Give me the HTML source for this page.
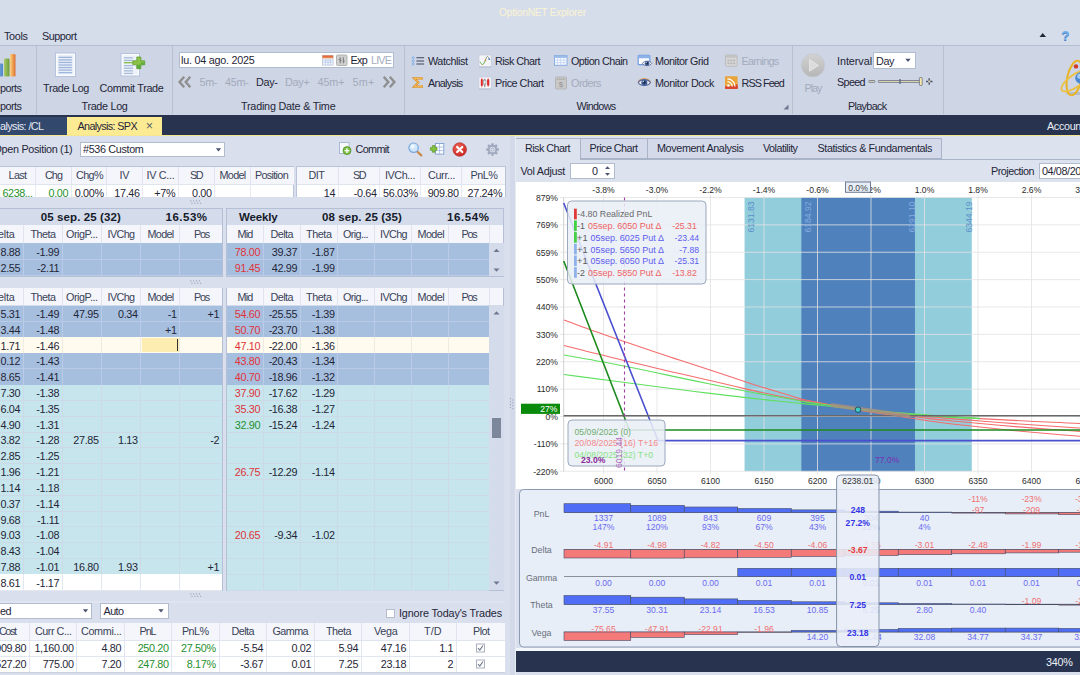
<!DOCTYPE html>
<html lang="es"><head><meta charset="utf-8"><title>OptionNET Explorer</title>
<style>
html,body{margin:0;padding:0;}
body{width:1080px;height:675px;overflow:hidden;background:#d5dcea;font-family:"Liberation Sans",sans-serif;position:relative;}
.t{position:absolute;white-space:pre;line-height:1;}
.b{position:absolute;box-sizing:border-box;}
svg{overflow:visible;}
svg text{font-family:"Liberation Sans",sans-serif;}
</style></head>
<body>
<div class="t" style="left:499px;top:8px;font-size:10.2px;letter-spacing:-0.23px;color:#fbf4d2;">OptionNET Explorer</div>
<div class="t" style="left:4px;top:31px;font-size:10.8px;letter-spacing:-0.34px;color:#1f2638;">Tools</div>
<div class="t" style="left:42px;top:31px;font-size:10.8px;letter-spacing:-0.48px;color:#1f2638;">Support</div>
<svg class="b" style="left:1039px;top:32px" width="9" height="7"><g transform="translate(0 0)"><path d="M0.5 5 L3.7 1 L7 5 Z" fill="#1f2638"/></g></svg>
<div class="t" style="left:1061.18px;top:29px;font-size:13.5px;letter-spacing:0px;color:#74aee6;font-weight:bold;text-shadow:0 0.6px 0 #3f7fc4;">?</div>
<div class="b" style="left:0px;top:45px;width:1080px;height:70px;background:#ced5e5;border-top:1px solid #b4bed2;box-sizing:border-box;"></div>
<div class="b" style="left:35.5px;top:46px;width:1px;height:67.5px;background:#b7c0d3;"></div>
<div class="b" style="left:172px;top:46px;width:1px;height:67.5px;background:#b7c0d3;"></div>
<div class="b" style="left:404px;top:46px;width:1px;height:67.5px;background:#b7c0d3;"></div>
<div class="b" style="left:792px;top:46px;width:1px;height:67.5px;background:#b7c0d3;"></div>
<div class="b" style="left:942.5px;top:46px;width:1px;height:67.5px;background:#b7c0d3;"></div>
<div class="t" style="left:0px;top:101px;font-size:10.8px;letter-spacing:-0.5px;color:#1f2638;">ports</div>
<div class="t" style="left:81.5px;top:101px;font-size:10.8px;letter-spacing:-0.31px;color:#1f2638;">Trade Log</div>
<div class="t" style="left:241px;top:101px;font-size:10.8px;letter-spacing:-0.22px;color:#1f2638;">Trading Date &amp; Time</div>
<div class="t" style="left:576.5px;top:101px;font-size:10.8px;letter-spacing:-0.69px;color:#1f2638;">Windows</div>
<div class="t" style="left:848px;top:101px;font-size:10.8px;letter-spacing:-0.67px;color:#1f2638;">Playback</div>
<svg class="b" style="left:783px;top:104px" width="7" height="7"><g transform="translate(0 0)"><path d="M5.5 0.5 V5.5 H0.5 Z" fill="#6d7890"/></g></svg>
<div class="t" style="left:0px;top:83px;font-size:10.8px;letter-spacing:-0.5px;color:#1f2638;">ports</div>
<div class="t" style="left:43px;top:83px;font-size:10.8px;letter-spacing:-0.31px;color:#1f2638;">Trade Log</div>
<div class="t" style="left:99.5px;top:83px;font-size:10.8px;letter-spacing:-0.32px;color:#1f2638;">Commit Trade</div>
<div class="b" style="left:179px;top:51.5px;width:214.5px;height:16.5px;background:#ffffff;border:1px solid #b2bccf;box-sizing:border-box;"></div>
<div class="t" style="left:181px;top:55px;font-size:10.8px;letter-spacing:-0.25px;color:#1f2638;">lu. 04 ago. 2025</div>
<div class="t" style="left:350.5px;top:55px;font-size:10.8px;letter-spacing:-0.7px;color:#1f2638;">Exp</div>
<div class="t" style="left:371px;top:55px;font-size:10.8px;letter-spacing:-0.85px;color:#a7aebd;">LIVE</div>
<div class="t" style="left:199.5px;top:77px;font-size:10.8px;letter-spacing:-0.37px;color:#a3abbb;">5m-</div>
<div class="t" style="left:225px;top:77px;font-size:10.8px;letter-spacing:-0.28px;color:#a3abbb;">45m-</div>
<div class="t" style="left:256px;top:77px;font-size:10.8px;letter-spacing:-0.33px;color:#1f2638;">Day-</div>
<div class="t" style="left:285px;top:77px;font-size:10.8px;letter-spacing:-0.25px;color:#a3abbb;">Day+</div>
<div class="t" style="left:317.5px;top:77px;font-size:10.8px;letter-spacing:-0.08px;color:#a3abbb;">45m+</div>
<div class="t" style="left:352.5px;top:77px;font-size:10.8px;letter-spacing:0.23px;color:#a3abbb;">5m+</div>
<div class="t" style="left:428px;top:56px;font-size:10.8px;letter-spacing:-0.43px;color:#1f2638;">Watchlist</div>
<div class="t" style="left:428px;top:78px;font-size:10.8px;letter-spacing:-0.71px;color:#1f2638;">Analysis</div>
<div class="t" style="left:495px;top:56px;font-size:10.8px;letter-spacing:-0.54px;color:#1f2638;">Risk Chart</div>
<div class="t" style="left:495px;top:78px;font-size:10.8px;letter-spacing:-0.5px;color:#1f2638;">Price Chart</div>
<div class="t" style="left:571px;top:56px;font-size:10.8px;letter-spacing:-0.54px;color:#1f2638;">Option Chain</div>
<div class="t" style="left:571px;top:78px;font-size:10.8px;letter-spacing:-0.5px;color:#a3abbb;">Orders</div>
<div class="t" style="left:655px;top:56px;font-size:10.8px;letter-spacing:-0.49px;color:#1f2638;">Monitor Grid</div>
<div class="t" style="left:655px;top:78px;font-size:10.8px;letter-spacing:-0.39px;color:#1f2638;">Monitor Dock</div>
<div class="t" style="left:741.5px;top:56px;font-size:10.8px;letter-spacing:-0.7px;color:#a3abbb;">Earnings</div>
<div class="t" style="left:741.5px;top:78px;font-size:10.8px;letter-spacing:-0.92px;color:#1f2638;">RSS Feed</div>
<div class="t" style="left:804.5px;top:83px;font-size:10.8px;letter-spacing:-1px;color:#a3abbb;">Play</div>
<div class="t" style="left:837px;top:56px;font-size:10.8px;letter-spacing:-0.05px;color:#1f2638;">Interval</div>
<div class="b" style="left:873px;top:52px;width:43px;height:16.5px;background:#ffffff;border:1px solid #b2bccf;box-sizing:border-box;"></div>
<div class="t" style="left:876px;top:56px;font-size:10.8px;letter-spacing:-0.4px;color:#1f2638;">Day</div>
<svg class="b" style="left:905px;top:58px" width="7" height="5"><g transform="translate(0 0.5)"><path d="M0.3 0.3 H5.7 L3 3.6 Z" fill="#4a556e"/></g></svg>
<div class="t" style="left:837px;top:77px;font-size:10.8px;letter-spacing:-0.65px;color:#1f2638;">Speed</div>
<div class="b" style="left:0px;top:115px;width:1080px;height:20.5px;background:#28344f;"></div>
<div class="b" style="left:0px;top:117px;width:67px;height:18.5px;background:#33486d;"></div>
<div class="t" style="left:0px;top:121px;font-size:10.8px;letter-spacing:-0.57px;color:#e8ecf5;">alysis: /CL</div>
<div class="b" style="left:67px;top:117px;width:94.5px;height:19px;background:#fdeb93;"></div>
<div class="t" style="left:77.5px;top:121px;font-size:10.8px;letter-spacing:-0.64px;color:#1f2638;">Analysis: SPX</div>
<div class="t" style="left:145.85px;top:120px;font-size:12.5px;letter-spacing:0px;color:#5a5f6c;">×</div>
<div class="t" style="left:1047px;top:121px;font-size:10.8px;letter-spacing:-0.34px;color:#e8ecf5;">Accoun</div>
<div class="b" style="left:0px;top:134.8px;width:1080px;height:1.4px;background:#f5e791;"></div>
<div class="b" style="left:0px;top:136.2px;width:1080px;height:540px;background:#d9dfed;"></div>
<div class="t" style="left:-6.5px;top:144px;font-size:10.8px;letter-spacing:-0.3px;color:#1f2638;">Open Position (1)</div>
<div class="b" style="left:80px;top:142px;width:145px;height:15px;background:#ffffff;border:1px solid #b2bccf;"></div>
<div class="t" style="left:83px;top:144px;font-size:10.8px;letter-spacing:-0.34px;color:#1f2638;">#536 Custom</div>
<svg class="b" style="left:215px;top:148px" width="7" height="5"><g transform="translate(0.5 0)"><path d="M0.3 0.3 H5.7 L3 3.6 Z" fill="#4a556e"/></g></svg>
<div class="t" style="left:355.5px;top:144px;font-size:10.8px;letter-spacing:-0.62px;color:#1f2638;">Commit</div>
<div class="b" style="left:-1px;top:166.3px;width:295px;height:32px;background:#ffffff;border:1px solid #b9c4da;"></div>
<div class="b" style="left:-1px;top:167px;width:294.5px;height:17.5px;background:#f4f6fb;"></div>
<div class="b" style="left:35px;top:167px;width:1px;height:17.5px;background:#dfe4ef;"></div>
<div class="b" style="left:71px;top:167px;width:1px;height:17.5px;background:#dfe4ef;"></div>
<div class="b" style="left:106px;top:167px;width:1px;height:17.5px;background:#dfe4ef;"></div>
<div class="b" style="left:142px;top:167px;width:1px;height:17.5px;background:#dfe4ef;"></div>
<div class="b" style="left:177.5px;top:167px;width:1px;height:17.5px;background:#dfe4ef;"></div>
<div class="b" style="left:213.5px;top:167px;width:1px;height:17.5px;background:#dfe4ef;"></div>
<div class="b" style="left:249.5px;top:167px;width:1px;height:17.5px;background:#dfe4ef;"></div>
<div class="t" style="left:8.5px;top:170px;font-size:10.8px;letter-spacing:-0.6px;color:#3a4258;">Last</div>
<div class="t" style="left:45px;top:170px;font-size:10.8px;letter-spacing:-0.94px;color:#3a4258;">Chg</div>
<div class="t" style="left:76px;top:170px;font-size:10.8px;letter-spacing:-0.6px;color:#3a4258;">Chg%</div>
<div class="t" style="left:119.5px;top:170px;font-size:10.8px;letter-spacing:-0.35px;color:#3a4258;">IV</div>
<div class="t" style="left:146.5px;top:170px;font-size:10.8px;letter-spacing:-0.29px;color:#3a4258;">IV C...</div>
<div class="t" style="left:190px;top:170px;font-size:10.8px;letter-spacing:-1.5px;color:#3a4258;">SD</div>
<div class="t" style="left:219.5px;top:170px;font-size:10.8px;letter-spacing:-0.68px;color:#3a4258;">Model</div>
<div class="t" style="left:255px;top:170px;font-size:10.8px;letter-spacing:-0.68px;color:#3a4258;">Position</div>
<div class="b" style="left:-1px;top:184px;width:294.5px;height:1px;background:#dfe4ef;"></div>
<div class="b" style="left:35px;top:184.5px;width:1px;height:13px;background:#e6eaf2;"></div>
<div class="b" style="left:71px;top:184.5px;width:1px;height:13px;background:#e6eaf2;"></div>
<div class="b" style="left:106px;top:184.5px;width:1px;height:13px;background:#e6eaf2;"></div>
<div class="b" style="left:142px;top:184.5px;width:1px;height:13px;background:#e6eaf2;"></div>
<div class="b" style="left:177.5px;top:184.5px;width:1px;height:13px;background:#e6eaf2;"></div>
<div class="b" style="left:213.5px;top:184.5px;width:1px;height:13px;background:#e6eaf2;"></div>
<div class="b" style="left:249.5px;top:184.5px;width:1px;height:13px;background:#e6eaf2;"></div>
<div class="t" style="left:2.5px;top:188px;font-size:10.8px;letter-spacing:-0.43px;color:#1f8f2e;">6238...</div>
<div class="t" style="left:48.53px;top:188px;font-size:10.8px;letter-spacing:-0.35px;color:#1f8f2e;">0.00</div>
<div class="t" style="left:74.78px;top:188px;font-size:10.8px;letter-spacing:-0.35px;color:#1f2638;">0.00%</div>
<div class="t" style="left:114.37px;top:188px;font-size:10.8px;letter-spacing:-0.35px;color:#1f2638;">17.46</div>
<div class="t" style="left:154.28px;top:188px;font-size:10.8px;letter-spacing:-0.35px;color:#1f2638;">+7%</div>
<div class="t" style="left:192.03px;top:188px;font-size:10.8px;letter-spacing:-0.35px;color:#1f2638;">0.00</div>
<div class="b" style="left:296.4px;top:166.3px;width:209.2px;height:32px;background:#ffffff;border:1px solid #b9c4da;"></div>
<div class="b" style="left:297px;top:167px;width:208px;height:17.5px;background:#f4f6fb;"></div>
<div class="b" style="left:337.5px;top:167px;width:1px;height:17.5px;background:#dfe4ef;"></div>
<div class="b" style="left:378.5px;top:167px;width:1px;height:17.5px;background:#dfe4ef;"></div>
<div class="b" style="left:420px;top:167px;width:1px;height:17.5px;background:#dfe4ef;"></div>
<div class="b" style="left:461.2px;top:167px;width:1px;height:17.5px;background:#dfe4ef;"></div>
<div class="t" style="left:308.5px;top:170px;font-size:10.8px;letter-spacing:-0.47px;color:#3a4258;">DIT</div>
<div class="t" style="left:353px;top:170px;font-size:10.8px;letter-spacing:-1.5px;color:#3a4258;">SD</div>
<div class="t" style="left:385px;top:170px;font-size:10.8px;letter-spacing:-0.43px;color:#3a4258;">IVCh...</div>
<div class="t" style="left:428px;top:170px;font-size:10.8px;letter-spacing:-0.34px;color:#3a4258;">Curr...</div>
<div class="t" style="left:470.5px;top:170px;font-size:10.8px;letter-spacing:-0.45px;color:#3a4258;">PnL%</div>
<div class="b" style="left:297px;top:184px;width:208px;height:1px;background:#dfe4ef;"></div>
<div class="b" style="left:337.5px;top:184.5px;width:1px;height:13px;background:#e6eaf2;"></div>
<div class="b" style="left:378.5px;top:184.5px;width:1px;height:13px;background:#e6eaf2;"></div>
<div class="b" style="left:420px;top:184.5px;width:1px;height:13px;background:#e6eaf2;"></div>
<div class="b" style="left:461.2px;top:184.5px;width:1px;height:13px;background:#e6eaf2;"></div>
<div class="t" style="left:323.84px;top:188px;font-size:10.8px;letter-spacing:-0.35px;color:#1f2638;">14</div>
<div class="t" style="left:353.78px;top:188px;font-size:10.8px;letter-spacing:-0.35px;color:#1f2638;">-0.64</div>
<div class="t" style="left:383.12px;top:188px;font-size:10.8px;letter-spacing:-0.35px;color:#1f2638;">56.03%</div>
<div class="t" style="left:427.72px;top:188px;font-size:10.8px;letter-spacing:-0.35px;color:#1f2638;">909.80</div>
<div class="t" style="left:467.62px;top:188px;font-size:10.8px;letter-spacing:-0.35px;color:#1f2638;">27.24%</div>
<div class="b" style="left:-1px;top:197.2px;width:520px;height:10.3px;background:#d9dfed;"></div>
<svg class="b" style="left:0;top:0" width="1080" height="675"><rect x="190.15" y="200.3" width="1.2" height="1.2" fill="#9fa9be"/><rect x="191.35" y="202.7" width="1.2" height="1.2" fill="#9fa9be"/><rect x="193.05" y="200.3" width="1.2" height="1.2" fill="#9fa9be"/><rect x="194.25" y="202.7" width="1.2" height="1.2" fill="#9fa9be"/><rect x="195.95" y="200.3" width="1.2" height="1.2" fill="#9fa9be"/><rect x="197.15" y="202.7" width="1.2" height="1.2" fill="#9fa9be"/><rect x="198.85" y="200.3" width="1.2" height="1.2" fill="#9fa9be"/><rect x="200.05" y="202.7" width="1.2" height="1.2" fill="#9fa9be"/></svg>
<svg class="b" style="left:0;top:0" width="1080" height="675"><rect x="190.15" y="280.3" width="1.2" height="1.2" fill="#9fa9be"/><rect x="191.35" y="282.7" width="1.2" height="1.2" fill="#9fa9be"/><rect x="193.05" y="280.3" width="1.2" height="1.2" fill="#9fa9be"/><rect x="194.25" y="282.7" width="1.2" height="1.2" fill="#9fa9be"/><rect x="195.95" y="280.3" width="1.2" height="1.2" fill="#9fa9be"/><rect x="197.15" y="282.7" width="1.2" height="1.2" fill="#9fa9be"/><rect x="198.85" y="280.3" width="1.2" height="1.2" fill="#9fa9be"/><rect x="200.05" y="282.7" width="1.2" height="1.2" fill="#9fa9be"/></svg>
<svg class="b" style="left:0;top:0" width="1080" height="675"><rect x="190.15" y="593.3" width="1.2" height="1.2" fill="#9fa9be"/><rect x="191.35" y="595.7" width="1.2" height="1.2" fill="#9fa9be"/><rect x="193.05" y="593.3" width="1.2" height="1.2" fill="#9fa9be"/><rect x="194.25" y="595.7" width="1.2" height="1.2" fill="#9fa9be"/><rect x="195.95" y="593.3" width="1.2" height="1.2" fill="#9fa9be"/><rect x="197.15" y="595.7" width="1.2" height="1.2" fill="#9fa9be"/><rect x="198.85" y="593.3" width="1.2" height="1.2" fill="#9fa9be"/><rect x="200.05" y="595.7" width="1.2" height="1.2" fill="#9fa9be"/></svg>
<div class="b" style="left:-1px;top:207.5px;width:224px;height:69.5px;background:#d4dbeb;border:1px solid #b5c0d6;"></div>
<div class="t" style="left:40.7px;top:212px;font-size:11.5px;letter-spacing:0.11px;color:#141a29;font-weight:bold;">05 sep. 25 (32)</div>
<div class="t" style="left:165.5px;top:212px;font-size:11.5px;letter-spacing:0.5px;color:#141a29;font-weight:bold;">16.53%</div>
<div class="b" style="left:0px;top:225.3px;width:222px;height:18px;background:#f4f6fb;"></div>
<div class="b" style="left:22.5px;top:225.3px;width:1px;height:18px;background:#dfe4ef;"></div>
<div class="b" style="left:61.5px;top:225.3px;width:1px;height:18px;background:#dfe4ef;"></div>
<div class="b" style="left:100.5px;top:225.3px;width:1px;height:18px;background:#dfe4ef;"></div>
<div class="b" style="left:140px;top:225.3px;width:1px;height:18px;background:#dfe4ef;"></div>
<div class="b" style="left:179px;top:225.3px;width:1px;height:18px;background:#dfe4ef;"></div>
<div class="t" style="left:-2px;top:229px;font-size:10.8px;letter-spacing:-0.23px;color:#3a4258;">elta</div>
<div class="t" style="left:30.5px;top:229px;font-size:10.8px;letter-spacing:-0.52px;color:#3a4258;">Theta</div>
<div class="t" style="left:66px;top:229px;font-size:10.8px;letter-spacing:-0.46px;color:#3a4258;">OrigP...</div>
<div class="t" style="left:107.5px;top:229px;font-size:10.8px;letter-spacing:-0.6px;color:#3a4258;">IVChg</div>
<div class="t" style="left:147.5px;top:229px;font-size:10.8px;letter-spacing:-0.68px;color:#3a4258;">Model</div>
<div class="t" style="left:194px;top:229px;font-size:10.8px;letter-spacing:-1.2px;color:#3a4258;">Pos</div>
<div class="b" style="left:0px;top:243.3px;width:222px;height:15.95px;background:#a7bfde;"></div>
<div class="b" style="left:0px;top:259.2px;width:222px;height:15.95px;background:#a7bfde;"></div>
<div class="b" style="left:22.5px;top:243.3px;width:1px;height:15.9px;background:#b9cbe6;"></div>
<div class="b" style="left:61.5px;top:243.3px;width:1px;height:15.9px;background:#b9cbe6;"></div>
<div class="b" style="left:100.5px;top:243.3px;width:1px;height:15.9px;background:#b9cbe6;"></div>
<div class="b" style="left:140px;top:243.3px;width:1px;height:15.9px;background:#b9cbe6;"></div>
<div class="b" style="left:179px;top:243.3px;width:1px;height:15.9px;background:#b9cbe6;"></div>
<div class="b" style="left:0px;top:258.7px;width:222px;height:1px;background:#b9cbe6;"></div>
<div class="b" style="left:22.5px;top:259.2px;width:1px;height:15.9px;background:#b9cbe6;"></div>
<div class="b" style="left:61.5px;top:259.2px;width:1px;height:15.9px;background:#b9cbe6;"></div>
<div class="b" style="left:100.5px;top:259.2px;width:1px;height:15.9px;background:#b9cbe6;"></div>
<div class="b" style="left:140px;top:259.2px;width:1px;height:15.9px;background:#b9cbe6;"></div>
<div class="b" style="left:179px;top:259.2px;width:1px;height:15.9px;background:#b9cbe6;"></div>
<div class="b" style="left:0px;top:274.6px;width:222px;height:1px;background:#b9cbe6;"></div>
<div class="t" style="left:0.53px;top:247px;font-size:10.8px;letter-spacing:-0.35px;color:#1f2638;">8.88</div>
<div class="t" style="left:36.28px;top:247px;font-size:10.8px;letter-spacing:-0.35px;color:#1f2638;">-1.99</div>
<div class="t" style="left:0.53px;top:263px;font-size:10.8px;letter-spacing:-0.35px;color:#1f2638;">2.55</div>
<div class="t" style="left:37.08px;top:263px;font-size:10.8px;letter-spacing:-0.35px;color:#1f2638;">-2.11</div>
<div class="b" style="left:225.6px;top:207.5px;width:278.9px;height:69.5px;background:#d4dbeb;border:1px solid #b5c0d6;"></div>
<div class="t" style="left:239px;top:212px;font-size:11.5px;letter-spacing:-0.15px;color:#141a29;font-weight:bold;">Weekly</div>
<div class="t" style="left:322px;top:212px;font-size:11.5px;letter-spacing:0.09px;color:#141a29;font-weight:bold;">08 sep. 25 (35)</div>
<div class="t" style="left:447px;top:212px;font-size:11.5px;letter-spacing:0.58px;color:#141a29;font-weight:bold;">16.54%</div>
<div class="b" style="left:226.6px;top:225.3px;width:276.9px;height:18px;background:#f4f6fb;"></div>
<div class="b" style="left:262.5px;top:225.3px;width:1px;height:18px;background:#dfe4ef;"></div>
<div class="b" style="left:299.5px;top:225.3px;width:1px;height:18px;background:#dfe4ef;"></div>
<div class="b" style="left:336.5px;top:225.3px;width:1px;height:18px;background:#dfe4ef;"></div>
<div class="b" style="left:373.5px;top:225.3px;width:1px;height:18px;background:#dfe4ef;"></div>
<div class="b" style="left:410.5px;top:225.3px;width:1px;height:18px;background:#dfe4ef;"></div>
<div class="b" style="left:447.5px;top:225.3px;width:1px;height:18px;background:#dfe4ef;"></div>
<div class="b" style="left:488.5px;top:225.3px;width:1px;height:18px;background:#dfe4ef;"></div>
<div class="t" style="left:237.5px;top:229px;font-size:10.8px;letter-spacing:-0.8px;color:#3a4258;">Mid</div>
<div class="t" style="left:270.5px;top:229px;font-size:10.8px;letter-spacing:-0.54px;color:#3a4258;">Delta</div>
<div class="t" style="left:306px;top:229px;font-size:10.8px;letter-spacing:-0.42px;color:#3a4258;">Theta</div>
<div class="t" style="left:343px;top:229px;font-size:10.8px;letter-spacing:-0.63px;color:#3a4258;">Orig...</div>
<div class="t" style="left:380px;top:229px;font-size:10.8px;letter-spacing:-0.6px;color:#3a4258;">IVChg</div>
<div class="t" style="left:417.5px;top:229px;font-size:10.8px;letter-spacing:-0.58px;color:#3a4258;">Model</div>
<div class="t" style="left:461.5px;top:229px;font-size:10.8px;letter-spacing:-1.2px;color:#3a4258;">Pos</div>
<div class="b" style="left:226.6px;top:243.3px;width:262.4px;height:15.95px;background:#a7bfde;"></div>
<div class="b" style="left:226.6px;top:259.2px;width:262.4px;height:15.95px;background:#a7bfde;"></div>
<div class="b" style="left:262.5px;top:243.3px;width:1px;height:15.9px;background:#b9cbe6;"></div>
<div class="b" style="left:299.5px;top:243.3px;width:1px;height:15.9px;background:#b9cbe6;"></div>
<div class="b" style="left:336.5px;top:243.3px;width:1px;height:15.9px;background:#b9cbe6;"></div>
<div class="b" style="left:373.5px;top:243.3px;width:1px;height:15.9px;background:#b9cbe6;"></div>
<div class="b" style="left:410.5px;top:243.3px;width:1px;height:15.9px;background:#b9cbe6;"></div>
<div class="b" style="left:447.5px;top:243.3px;width:1px;height:15.9px;background:#b9cbe6;"></div>
<div class="b" style="left:226.6px;top:258.7px;width:262.4px;height:1px;background:#b9cbe6;"></div>
<div class="b" style="left:262.5px;top:259.2px;width:1px;height:15.9px;background:#b9cbe6;"></div>
<div class="b" style="left:299.5px;top:259.2px;width:1px;height:15.9px;background:#b9cbe6;"></div>
<div class="b" style="left:336.5px;top:259.2px;width:1px;height:15.9px;background:#b9cbe6;"></div>
<div class="b" style="left:373.5px;top:259.2px;width:1px;height:15.9px;background:#b9cbe6;"></div>
<div class="b" style="left:410.5px;top:259.2px;width:1px;height:15.9px;background:#b9cbe6;"></div>
<div class="b" style="left:447.5px;top:259.2px;width:1px;height:15.9px;background:#b9cbe6;"></div>
<div class="b" style="left:226.6px;top:274.6px;width:262.4px;height:1px;background:#b9cbe6;"></div>
<div class="t" style="left:234.87px;top:247px;font-size:10.8px;letter-spacing:-0.35px;color:#e0333b;">78.00</div>
<div class="t" style="left:271.87px;top:247px;font-size:10.8px;letter-spacing:-0.35px;color:#1f2638;">39.37</div>
<div class="t" style="left:311.78px;top:247px;font-size:10.8px;letter-spacing:-0.35px;color:#1f2638;">-1.87</div>
<div class="t" style="left:234.87px;top:263px;font-size:10.8px;letter-spacing:-0.35px;color:#e0333b;">91.45</div>
<div class="t" style="left:271.87px;top:263px;font-size:10.8px;letter-spacing:-0.35px;color:#1f2638;">42.99</div>
<div class="t" style="left:311.78px;top:263px;font-size:10.8px;letter-spacing:-0.35px;color:#1f2638;">-1.99</div>
<div class="b" style="left:489px;top:243.3px;width:14.5px;height:32.7px;background:#d4dbeb;"></div>
<svg class="b" style="left:0;top:0" width="1080" height="675"><path d="M493.5 252 L496.5 248.8 L499.5 252 Z" fill="#6d7890"/></svg>
<svg class="b" style="left:0;top:0" width="1080" height="675"><path d="M493.5 268.5 L496.5 271.7 L499.5 268.5 Z" fill="#6d7890"/></svg>
<div class="b" style="left:-1px;top:287.5px;width:224px;height:303.1px;background:#d4dbeb;border:1px solid #b5c0d6;"></div>
<div class="b" style="left:0px;top:288.3px;width:222px;height:17.2px;background:#f4f6fb;"></div>
<div class="b" style="left:22.5px;top:288.3px;width:1px;height:17.2px;background:#dfe4ef;"></div>
<div class="b" style="left:61.5px;top:288.3px;width:1px;height:17.2px;background:#dfe4ef;"></div>
<div class="b" style="left:100.5px;top:288.3px;width:1px;height:17.2px;background:#dfe4ef;"></div>
<div class="b" style="left:140px;top:288.3px;width:1px;height:17.2px;background:#dfe4ef;"></div>
<div class="b" style="left:179px;top:288.3px;width:1px;height:17.2px;background:#dfe4ef;"></div>
<div class="t" style="left:-2px;top:292px;font-size:10.8px;letter-spacing:-0.23px;color:#3a4258;">elta</div>
<div class="t" style="left:30.5px;top:292px;font-size:10.8px;letter-spacing:-0.52px;color:#3a4258;">Theta</div>
<div class="t" style="left:66px;top:292px;font-size:10.8px;letter-spacing:-0.46px;color:#3a4258;">OrigP...</div>
<div class="t" style="left:107.5px;top:292px;font-size:10.8px;letter-spacing:-0.6px;color:#3a4258;">IVChg</div>
<div class="t" style="left:147.5px;top:292px;font-size:10.8px;letter-spacing:-0.68px;color:#3a4258;">Model</div>
<div class="t" style="left:194px;top:292px;font-size:10.8px;letter-spacing:-1.2px;color:#3a4258;">Pos</div>
<div class="b" style="left:0px;top:305.5px;width:222px;height:15.87px;background:#a7bfde;"></div>
<div class="b" style="left:0px;top:321.32px;width:222px;height:15.87px;background:#a7bfde;"></div>
<div class="b" style="left:0px;top:337.14px;width:222px;height:15.87px;background:#fffbee;"></div>
<div class="b" style="left:0px;top:352.96px;width:222px;height:15.87px;background:#a7bfde;"></div>
<div class="b" style="left:0px;top:368.78px;width:222px;height:15.87px;background:#a7bfde;"></div>
<div class="b" style="left:0px;top:384.6px;width:222px;height:15.87px;background:#c6e5ec;"></div>
<div class="b" style="left:0px;top:400.42px;width:222px;height:15.87px;background:#c6e5ec;"></div>
<div class="b" style="left:0px;top:416.24px;width:222px;height:15.87px;background:#c6e5ec;"></div>
<div class="b" style="left:0px;top:432.06px;width:222px;height:15.87px;background:#c6e5ec;"></div>
<div class="b" style="left:0px;top:447.88px;width:222px;height:15.87px;background:#c6e5ec;"></div>
<div class="b" style="left:0px;top:463.7px;width:222px;height:15.87px;background:#c6e5ec;"></div>
<div class="b" style="left:0px;top:479.52px;width:222px;height:15.87px;background:#c6e5ec;"></div>
<div class="b" style="left:0px;top:495.34px;width:222px;height:15.87px;background:#c6e5ec;"></div>
<div class="b" style="left:0px;top:511.16px;width:222px;height:15.87px;background:#c6e5ec;"></div>
<div class="b" style="left:0px;top:526.98px;width:222px;height:15.87px;background:#c6e5ec;"></div>
<div class="b" style="left:0px;top:542.8px;width:222px;height:15.87px;background:#c6e5ec;"></div>
<div class="b" style="left:0px;top:558.62px;width:222px;height:15.87px;background:#c6e5ec;"></div>
<div class="b" style="left:0px;top:574.44px;width:222px;height:15.87px;background:#ffffff;"></div>
<div class="b" style="left:22.5px;top:305.5px;width:1px;height:15.82px;background:#b9cbe6;"></div>
<div class="b" style="left:61.5px;top:305.5px;width:1px;height:15.82px;background:#b9cbe6;"></div>
<div class="b" style="left:100.5px;top:305.5px;width:1px;height:15.82px;background:#b9cbe6;"></div>
<div class="b" style="left:140px;top:305.5px;width:1px;height:15.82px;background:#b9cbe6;"></div>
<div class="b" style="left:179px;top:305.5px;width:1px;height:15.82px;background:#b9cbe6;"></div>
<div class="b" style="left:0px;top:320.82px;width:222px;height:1px;background:#b9cbe6;"></div>
<div class="b" style="left:22.5px;top:321.32px;width:1px;height:15.82px;background:#b9cbe6;"></div>
<div class="b" style="left:61.5px;top:321.32px;width:1px;height:15.82px;background:#b9cbe6;"></div>
<div class="b" style="left:100.5px;top:321.32px;width:1px;height:15.82px;background:#b9cbe6;"></div>
<div class="b" style="left:140px;top:321.32px;width:1px;height:15.82px;background:#b9cbe6;"></div>
<div class="b" style="left:179px;top:321.32px;width:1px;height:15.82px;background:#b9cbe6;"></div>
<div class="b" style="left:22.5px;top:337.14px;width:1px;height:15.82px;background:#efebe0;"></div>
<div class="b" style="left:61.5px;top:337.14px;width:1px;height:15.82px;background:#efebe0;"></div>
<div class="b" style="left:100.5px;top:337.14px;width:1px;height:15.82px;background:#efebe0;"></div>
<div class="b" style="left:140px;top:337.14px;width:1px;height:15.82px;background:#efebe0;"></div>
<div class="b" style="left:179px;top:337.14px;width:1px;height:15.82px;background:#efebe0;"></div>
<div class="b" style="left:22.5px;top:352.96px;width:1px;height:15.82px;background:#b9cbe6;"></div>
<div class="b" style="left:61.5px;top:352.96px;width:1px;height:15.82px;background:#b9cbe6;"></div>
<div class="b" style="left:100.5px;top:352.96px;width:1px;height:15.82px;background:#b9cbe6;"></div>
<div class="b" style="left:140px;top:352.96px;width:1px;height:15.82px;background:#b9cbe6;"></div>
<div class="b" style="left:179px;top:352.96px;width:1px;height:15.82px;background:#b9cbe6;"></div>
<div class="b" style="left:0px;top:368.28px;width:222px;height:1px;background:#b9cbe6;"></div>
<div class="b" style="left:22.5px;top:368.78px;width:1px;height:15.82px;background:#b9cbe6;"></div>
<div class="b" style="left:61.5px;top:368.78px;width:1px;height:15.82px;background:#b9cbe6;"></div>
<div class="b" style="left:100.5px;top:368.78px;width:1px;height:15.82px;background:#b9cbe6;"></div>
<div class="b" style="left:140px;top:368.78px;width:1px;height:15.82px;background:#b9cbe6;"></div>
<div class="b" style="left:179px;top:368.78px;width:1px;height:15.82px;background:#b9cbe6;"></div>
<div class="b" style="left:22.5px;top:384.6px;width:1px;height:15.82px;background:#cbdae6;"></div>
<div class="b" style="left:61.5px;top:384.6px;width:1px;height:15.82px;background:#cbdae6;"></div>
<div class="b" style="left:100.5px;top:384.6px;width:1px;height:15.82px;background:#cbdae6;"></div>
<div class="b" style="left:140px;top:384.6px;width:1px;height:15.82px;background:#cbdae6;"></div>
<div class="b" style="left:179px;top:384.6px;width:1px;height:15.82px;background:#cbdae6;"></div>
<div class="b" style="left:0px;top:399.92px;width:222px;height:1px;background:#cbdae6;"></div>
<div class="b" style="left:22.5px;top:400.42px;width:1px;height:15.82px;background:#cbdae6;"></div>
<div class="b" style="left:61.5px;top:400.42px;width:1px;height:15.82px;background:#cbdae6;"></div>
<div class="b" style="left:100.5px;top:400.42px;width:1px;height:15.82px;background:#cbdae6;"></div>
<div class="b" style="left:140px;top:400.42px;width:1px;height:15.82px;background:#cbdae6;"></div>
<div class="b" style="left:179px;top:400.42px;width:1px;height:15.82px;background:#cbdae6;"></div>
<div class="b" style="left:0px;top:415.74px;width:222px;height:1px;background:#cbdae6;"></div>
<div class="b" style="left:22.5px;top:416.24px;width:1px;height:15.82px;background:#cbdae6;"></div>
<div class="b" style="left:61.5px;top:416.24px;width:1px;height:15.82px;background:#cbdae6;"></div>
<div class="b" style="left:100.5px;top:416.24px;width:1px;height:15.82px;background:#cbdae6;"></div>
<div class="b" style="left:140px;top:416.24px;width:1px;height:15.82px;background:#cbdae6;"></div>
<div class="b" style="left:179px;top:416.24px;width:1px;height:15.82px;background:#cbdae6;"></div>
<div class="b" style="left:0px;top:431.56px;width:222px;height:1px;background:#cbdae6;"></div>
<div class="b" style="left:22.5px;top:432.06px;width:1px;height:15.82px;background:#cbdae6;"></div>
<div class="b" style="left:61.5px;top:432.06px;width:1px;height:15.82px;background:#cbdae6;"></div>
<div class="b" style="left:100.5px;top:432.06px;width:1px;height:15.82px;background:#cbdae6;"></div>
<div class="b" style="left:140px;top:432.06px;width:1px;height:15.82px;background:#cbdae6;"></div>
<div class="b" style="left:179px;top:432.06px;width:1px;height:15.82px;background:#cbdae6;"></div>
<div class="b" style="left:0px;top:447.38px;width:222px;height:1px;background:#cbdae6;"></div>
<div class="b" style="left:22.5px;top:447.88px;width:1px;height:15.82px;background:#cbdae6;"></div>
<div class="b" style="left:61.5px;top:447.88px;width:1px;height:15.82px;background:#cbdae6;"></div>
<div class="b" style="left:100.5px;top:447.88px;width:1px;height:15.82px;background:#cbdae6;"></div>
<div class="b" style="left:140px;top:447.88px;width:1px;height:15.82px;background:#cbdae6;"></div>
<div class="b" style="left:179px;top:447.88px;width:1px;height:15.82px;background:#cbdae6;"></div>
<div class="b" style="left:0px;top:463.2px;width:222px;height:1px;background:#cbdae6;"></div>
<div class="b" style="left:22.5px;top:463.7px;width:1px;height:15.82px;background:#cbdae6;"></div>
<div class="b" style="left:61.5px;top:463.7px;width:1px;height:15.82px;background:#cbdae6;"></div>
<div class="b" style="left:100.5px;top:463.7px;width:1px;height:15.82px;background:#cbdae6;"></div>
<div class="b" style="left:140px;top:463.7px;width:1px;height:15.82px;background:#cbdae6;"></div>
<div class="b" style="left:179px;top:463.7px;width:1px;height:15.82px;background:#cbdae6;"></div>
<div class="b" style="left:0px;top:479.02px;width:222px;height:1px;background:#cbdae6;"></div>
<div class="b" style="left:22.5px;top:479.52px;width:1px;height:15.82px;background:#cbdae6;"></div>
<div class="b" style="left:61.5px;top:479.52px;width:1px;height:15.82px;background:#cbdae6;"></div>
<div class="b" style="left:100.5px;top:479.52px;width:1px;height:15.82px;background:#cbdae6;"></div>
<div class="b" style="left:140px;top:479.52px;width:1px;height:15.82px;background:#cbdae6;"></div>
<div class="b" style="left:179px;top:479.52px;width:1px;height:15.82px;background:#cbdae6;"></div>
<div class="b" style="left:0px;top:494.84px;width:222px;height:1px;background:#cbdae6;"></div>
<div class="b" style="left:22.5px;top:495.34px;width:1px;height:15.82px;background:#cbdae6;"></div>
<div class="b" style="left:61.5px;top:495.34px;width:1px;height:15.82px;background:#cbdae6;"></div>
<div class="b" style="left:100.5px;top:495.34px;width:1px;height:15.82px;background:#cbdae6;"></div>
<div class="b" style="left:140px;top:495.34px;width:1px;height:15.82px;background:#cbdae6;"></div>
<div class="b" style="left:179px;top:495.34px;width:1px;height:15.82px;background:#cbdae6;"></div>
<div class="b" style="left:0px;top:510.66px;width:222px;height:1px;background:#cbdae6;"></div>
<div class="b" style="left:22.5px;top:511.16px;width:1px;height:15.82px;background:#cbdae6;"></div>
<div class="b" style="left:61.5px;top:511.16px;width:1px;height:15.82px;background:#cbdae6;"></div>
<div class="b" style="left:100.5px;top:511.16px;width:1px;height:15.82px;background:#cbdae6;"></div>
<div class="b" style="left:140px;top:511.16px;width:1px;height:15.82px;background:#cbdae6;"></div>
<div class="b" style="left:179px;top:511.16px;width:1px;height:15.82px;background:#cbdae6;"></div>
<div class="b" style="left:0px;top:526.48px;width:222px;height:1px;background:#cbdae6;"></div>
<div class="b" style="left:22.5px;top:526.98px;width:1px;height:15.82px;background:#cbdae6;"></div>
<div class="b" style="left:61.5px;top:526.98px;width:1px;height:15.82px;background:#cbdae6;"></div>
<div class="b" style="left:100.5px;top:526.98px;width:1px;height:15.82px;background:#cbdae6;"></div>
<div class="b" style="left:140px;top:526.98px;width:1px;height:15.82px;background:#cbdae6;"></div>
<div class="b" style="left:179px;top:526.98px;width:1px;height:15.82px;background:#cbdae6;"></div>
<div class="b" style="left:0px;top:542.3px;width:222px;height:1px;background:#cbdae6;"></div>
<div class="b" style="left:22.5px;top:542.8px;width:1px;height:15.82px;background:#cbdae6;"></div>
<div class="b" style="left:61.5px;top:542.8px;width:1px;height:15.82px;background:#cbdae6;"></div>
<div class="b" style="left:100.5px;top:542.8px;width:1px;height:15.82px;background:#cbdae6;"></div>
<div class="b" style="left:140px;top:542.8px;width:1px;height:15.82px;background:#cbdae6;"></div>
<div class="b" style="left:179px;top:542.8px;width:1px;height:15.82px;background:#cbdae6;"></div>
<div class="b" style="left:0px;top:558.12px;width:222px;height:1px;background:#cbdae6;"></div>
<div class="b" style="left:22.5px;top:558.62px;width:1px;height:15.82px;background:#cbdae6;"></div>
<div class="b" style="left:61.5px;top:558.62px;width:1px;height:15.82px;background:#cbdae6;"></div>
<div class="b" style="left:100.5px;top:558.62px;width:1px;height:15.82px;background:#cbdae6;"></div>
<div class="b" style="left:140px;top:558.62px;width:1px;height:15.82px;background:#cbdae6;"></div>
<div class="b" style="left:179px;top:558.62px;width:1px;height:15.82px;background:#cbdae6;"></div>
<div class="b" style="left:22.5px;top:574.44px;width:1px;height:15.82px;background:#e3e7f0;"></div>
<div class="b" style="left:61.5px;top:574.44px;width:1px;height:15.82px;background:#e3e7f0;"></div>
<div class="b" style="left:100.5px;top:574.44px;width:1px;height:15.82px;background:#e3e7f0;"></div>
<div class="b" style="left:140px;top:574.44px;width:1px;height:15.82px;background:#e3e7f0;"></div>
<div class="b" style="left:179px;top:574.44px;width:1px;height:15.82px;background:#e3e7f0;"></div>
<div class="b" style="left:0px;top:589.76px;width:222px;height:1px;background:#e3e7f0;"></div>
<div class="b" style="left:141.5px;top:337.94px;width:37px;height:14.22px;background:#fdedb0;"></div>
<div class="b" style="left:177px;top:339.14px;width:1px;height:11.82px;background:#333;"></div>
<div class="t" style="left:0.53px;top:309px;font-size:10.8px;letter-spacing:-0.35px;color:#1f2638;">5.31</div>
<div class="t" style="left:36.28px;top:309px;font-size:10.8px;letter-spacing:-0.35px;color:#1f2638;">-1.49</div>
<div class="t" style="left:73.37px;top:309px;font-size:10.8px;letter-spacing:-0.35px;color:#1f2638;">47.95</div>
<div class="t" style="left:118.03px;top:309px;font-size:10.8px;letter-spacing:-0.35px;color:#1f2638;">0.34</div>
<div class="t" style="left:167.75px;top:309px;font-size:10.8px;letter-spacing:-0.35px;color:#1f2638;">-1</div>
<div class="t" style="left:207.54px;top:309px;font-size:10.8px;letter-spacing:-0.35px;color:#1f2638;">+1</div>
<div class="t" style="left:0.53px;top:325px;font-size:10.8px;letter-spacing:-0.35px;color:#1f2638;">3.44</div>
<div class="t" style="left:36.28px;top:325px;font-size:10.8px;letter-spacing:-0.35px;color:#1f2638;">-1.48</div>
<div class="t" style="left:165.04px;top:325px;font-size:10.8px;letter-spacing:-0.35px;color:#1f2638;">+1</div>
<div class="t" style="left:0.53px;top:341px;font-size:10.8px;letter-spacing:-0.35px;color:#1f2638;">1.71</div>
<div class="t" style="left:36.28px;top:341px;font-size:10.8px;letter-spacing:-0.35px;color:#1f2638;">-1.46</div>
<div class="t" style="left:0.53px;top:356px;font-size:10.8px;letter-spacing:-0.35px;color:#1f2638;">0.12</div>
<div class="t" style="left:36.28px;top:356px;font-size:10.8px;letter-spacing:-0.35px;color:#1f2638;">-1.43</div>
<div class="t" style="left:0.53px;top:372px;font-size:10.8px;letter-spacing:-0.35px;color:#1f2638;">8.65</div>
<div class="t" style="left:36.28px;top:372px;font-size:10.8px;letter-spacing:-0.35px;color:#1f2638;">-1.41</div>
<div class="t" style="left:0.53px;top:388px;font-size:10.8px;letter-spacing:-0.35px;color:#1f2638;">7.30</div>
<div class="t" style="left:36.28px;top:388px;font-size:10.8px;letter-spacing:-0.35px;color:#1f2638;">-1.38</div>
<div class="t" style="left:0.53px;top:404px;font-size:10.8px;letter-spacing:-0.35px;color:#1f2638;">6.04</div>
<div class="t" style="left:36.28px;top:404px;font-size:10.8px;letter-spacing:-0.35px;color:#1f2638;">-1.35</div>
<div class="t" style="left:0.53px;top:420px;font-size:10.8px;letter-spacing:-0.35px;color:#1f2638;">4.90</div>
<div class="t" style="left:36.28px;top:420px;font-size:10.8px;letter-spacing:-0.35px;color:#1f2638;">-1.31</div>
<div class="t" style="left:0.53px;top:435px;font-size:10.8px;letter-spacing:-0.35px;color:#1f2638;">3.82</div>
<div class="t" style="left:36.28px;top:435px;font-size:10.8px;letter-spacing:-0.35px;color:#1f2638;">-1.28</div>
<div class="t" style="left:73.37px;top:435px;font-size:10.8px;letter-spacing:-0.35px;color:#1f2638;">27.85</div>
<div class="t" style="left:118.03px;top:435px;font-size:10.8px;letter-spacing:-0.35px;color:#1f2638;">1.13</div>
<div class="t" style="left:210.25px;top:435px;font-size:10.8px;letter-spacing:-0.35px;color:#1f2638;">-2</div>
<div class="t" style="left:0.53px;top:451px;font-size:10.8px;letter-spacing:-0.35px;color:#1f2638;">2.85</div>
<div class="t" style="left:36.28px;top:451px;font-size:10.8px;letter-spacing:-0.35px;color:#1f2638;">-1.25</div>
<div class="t" style="left:0.53px;top:467px;font-size:10.8px;letter-spacing:-0.35px;color:#1f2638;">1.96</div>
<div class="t" style="left:36.28px;top:467px;font-size:10.8px;letter-spacing:-0.35px;color:#1f2638;">-1.21</div>
<div class="t" style="left:0.53px;top:483px;font-size:10.8px;letter-spacing:-0.35px;color:#1f2638;">1.14</div>
<div class="t" style="left:36.28px;top:483px;font-size:10.8px;letter-spacing:-0.35px;color:#1f2638;">-1.18</div>
<div class="t" style="left:0.53px;top:499px;font-size:10.8px;letter-spacing:-0.35px;color:#1f2638;">0.37</div>
<div class="t" style="left:36.28px;top:499px;font-size:10.8px;letter-spacing:-0.35px;color:#1f2638;">-1.14</div>
<div class="t" style="left:0.53px;top:515px;font-size:10.8px;letter-spacing:-0.35px;color:#1f2638;">9.68</div>
<div class="t" style="left:37.08px;top:515px;font-size:10.8px;letter-spacing:-0.35px;color:#1f2638;">-1.11</div>
<div class="t" style="left:0.53px;top:530px;font-size:10.8px;letter-spacing:-0.35px;color:#1f2638;">9.03</div>
<div class="t" style="left:36.28px;top:530px;font-size:10.8px;letter-spacing:-0.35px;color:#1f2638;">-1.08</div>
<div class="t" style="left:0.53px;top:546px;font-size:10.8px;letter-spacing:-0.35px;color:#1f2638;">8.43</div>
<div class="t" style="left:36.28px;top:546px;font-size:10.8px;letter-spacing:-0.35px;color:#1f2638;">-1.04</div>
<div class="t" style="left:0.53px;top:562px;font-size:10.8px;letter-spacing:-0.35px;color:#1f2638;">7.88</div>
<div class="t" style="left:36.28px;top:562px;font-size:10.8px;letter-spacing:-0.35px;color:#1f2638;">-1.01</div>
<div class="t" style="left:73.37px;top:562px;font-size:10.8px;letter-spacing:-0.35px;color:#1f2638;">16.80</div>
<div class="t" style="left:118.03px;top:562px;font-size:10.8px;letter-spacing:-0.35px;color:#1f2638;">1.93</div>
<div class="t" style="left:207.54px;top:562px;font-size:10.8px;letter-spacing:-0.35px;color:#1f2638;">+1</div>
<div class="t" style="left:0.53px;top:578px;font-size:10.8px;letter-spacing:-0.35px;color:#1f2638;">8.61</div>
<div class="t" style="left:36.28px;top:578px;font-size:10.8px;letter-spacing:-0.35px;color:#1f2638;">-1.17</div>
<div class="b" style="left:225.6px;top:287.5px;width:278.9px;height:303.1px;background:#d4dbeb;border:1px solid #b5c0d6;"></div>
<div class="b" style="left:226.6px;top:288.3px;width:276.9px;height:17.2px;background:#f4f6fb;"></div>
<div class="b" style="left:262.5px;top:288.3px;width:1px;height:17.2px;background:#dfe4ef;"></div>
<div class="b" style="left:299.5px;top:288.3px;width:1px;height:17.2px;background:#dfe4ef;"></div>
<div class="b" style="left:336.5px;top:288.3px;width:1px;height:17.2px;background:#dfe4ef;"></div>
<div class="b" style="left:373.5px;top:288.3px;width:1px;height:17.2px;background:#dfe4ef;"></div>
<div class="b" style="left:410.5px;top:288.3px;width:1px;height:17.2px;background:#dfe4ef;"></div>
<div class="b" style="left:447.5px;top:288.3px;width:1px;height:17.2px;background:#dfe4ef;"></div>
<div class="b" style="left:488.5px;top:288.3px;width:1px;height:17.2px;background:#dfe4ef;"></div>
<div class="t" style="left:237.5px;top:292px;font-size:10.8px;letter-spacing:-0.8px;color:#3a4258;">Mid</div>
<div class="t" style="left:270.5px;top:292px;font-size:10.8px;letter-spacing:-0.54px;color:#3a4258;">Delta</div>
<div class="t" style="left:306px;top:292px;font-size:10.8px;letter-spacing:-0.42px;color:#3a4258;">Theta</div>
<div class="t" style="left:343px;top:292px;font-size:10.8px;letter-spacing:-0.63px;color:#3a4258;">Orig...</div>
<div class="t" style="left:380px;top:292px;font-size:10.8px;letter-spacing:-0.6px;color:#3a4258;">IVChg</div>
<div class="t" style="left:417.5px;top:292px;font-size:10.8px;letter-spacing:-0.58px;color:#3a4258;">Model</div>
<div class="t" style="left:461.5px;top:292px;font-size:10.8px;letter-spacing:-1.2px;color:#3a4258;">Pos</div>
<div class="b" style="left:226.6px;top:305.5px;width:262.4px;height:15.87px;background:#a7bfde;"></div>
<div class="b" style="left:226.6px;top:321.32px;width:262.4px;height:15.87px;background:#a7bfde;"></div>
<div class="b" style="left:226.6px;top:337.14px;width:262.4px;height:15.87px;background:#fffbee;"></div>
<div class="b" style="left:226.6px;top:352.96px;width:262.4px;height:15.87px;background:#a7bfde;"></div>
<div class="b" style="left:226.6px;top:368.78px;width:262.4px;height:15.87px;background:#a7bfde;"></div>
<div class="b" style="left:226.6px;top:384.6px;width:262.4px;height:15.87px;background:#c6e5ec;"></div>
<div class="b" style="left:226.6px;top:400.42px;width:262.4px;height:15.87px;background:#c6e5ec;"></div>
<div class="b" style="left:226.6px;top:416.24px;width:262.4px;height:15.87px;background:#c6e5ec;"></div>
<div class="b" style="left:226.6px;top:432.06px;width:262.4px;height:15.87px;background:#c6e5ec;"></div>
<div class="b" style="left:226.6px;top:447.88px;width:262.4px;height:15.87px;background:#c6e5ec;"></div>
<div class="b" style="left:226.6px;top:463.7px;width:262.4px;height:15.87px;background:#c6e5ec;"></div>
<div class="b" style="left:226.6px;top:479.52px;width:262.4px;height:15.87px;background:#c6e5ec;"></div>
<div class="b" style="left:226.6px;top:495.34px;width:262.4px;height:15.87px;background:#c6e5ec;"></div>
<div class="b" style="left:226.6px;top:511.16px;width:262.4px;height:15.87px;background:#c6e5ec;"></div>
<div class="b" style="left:226.6px;top:526.98px;width:262.4px;height:15.87px;background:#c6e5ec;"></div>
<div class="b" style="left:226.6px;top:542.8px;width:262.4px;height:15.87px;background:#c6e5ec;"></div>
<div class="b" style="left:226.6px;top:558.62px;width:262.4px;height:15.87px;background:#c6e5ec;"></div>
<div class="b" style="left:226.6px;top:574.44px;width:262.4px;height:15.87px;background:#c6e5ec;"></div>
<div class="b" style="left:262.5px;top:305.5px;width:1px;height:15.82px;background:#b9cbe6;"></div>
<div class="b" style="left:299.5px;top:305.5px;width:1px;height:15.82px;background:#b9cbe6;"></div>
<div class="b" style="left:336.5px;top:305.5px;width:1px;height:15.82px;background:#b9cbe6;"></div>
<div class="b" style="left:373.5px;top:305.5px;width:1px;height:15.82px;background:#b9cbe6;"></div>
<div class="b" style="left:410.5px;top:305.5px;width:1px;height:15.82px;background:#b9cbe6;"></div>
<div class="b" style="left:447.5px;top:305.5px;width:1px;height:15.82px;background:#b9cbe6;"></div>
<div class="b" style="left:226.6px;top:320.82px;width:262.4px;height:1px;background:#b9cbe6;"></div>
<div class="b" style="left:262.5px;top:321.32px;width:1px;height:15.82px;background:#b9cbe6;"></div>
<div class="b" style="left:299.5px;top:321.32px;width:1px;height:15.82px;background:#b9cbe6;"></div>
<div class="b" style="left:336.5px;top:321.32px;width:1px;height:15.82px;background:#b9cbe6;"></div>
<div class="b" style="left:373.5px;top:321.32px;width:1px;height:15.82px;background:#b9cbe6;"></div>
<div class="b" style="left:410.5px;top:321.32px;width:1px;height:15.82px;background:#b9cbe6;"></div>
<div class="b" style="left:447.5px;top:321.32px;width:1px;height:15.82px;background:#b9cbe6;"></div>
<div class="b" style="left:262.5px;top:337.14px;width:1px;height:15.82px;background:#efebe0;"></div>
<div class="b" style="left:299.5px;top:337.14px;width:1px;height:15.82px;background:#efebe0;"></div>
<div class="b" style="left:336.5px;top:337.14px;width:1px;height:15.82px;background:#efebe0;"></div>
<div class="b" style="left:373.5px;top:337.14px;width:1px;height:15.82px;background:#efebe0;"></div>
<div class="b" style="left:410.5px;top:337.14px;width:1px;height:15.82px;background:#efebe0;"></div>
<div class="b" style="left:447.5px;top:337.14px;width:1px;height:15.82px;background:#efebe0;"></div>
<div class="b" style="left:262.5px;top:352.96px;width:1px;height:15.82px;background:#b9cbe6;"></div>
<div class="b" style="left:299.5px;top:352.96px;width:1px;height:15.82px;background:#b9cbe6;"></div>
<div class="b" style="left:336.5px;top:352.96px;width:1px;height:15.82px;background:#b9cbe6;"></div>
<div class="b" style="left:373.5px;top:352.96px;width:1px;height:15.82px;background:#b9cbe6;"></div>
<div class="b" style="left:410.5px;top:352.96px;width:1px;height:15.82px;background:#b9cbe6;"></div>
<div class="b" style="left:447.5px;top:352.96px;width:1px;height:15.82px;background:#b9cbe6;"></div>
<div class="b" style="left:226.6px;top:368.28px;width:262.4px;height:1px;background:#b9cbe6;"></div>
<div class="b" style="left:262.5px;top:368.78px;width:1px;height:15.82px;background:#b9cbe6;"></div>
<div class="b" style="left:299.5px;top:368.78px;width:1px;height:15.82px;background:#b9cbe6;"></div>
<div class="b" style="left:336.5px;top:368.78px;width:1px;height:15.82px;background:#b9cbe6;"></div>
<div class="b" style="left:373.5px;top:368.78px;width:1px;height:15.82px;background:#b9cbe6;"></div>
<div class="b" style="left:410.5px;top:368.78px;width:1px;height:15.82px;background:#b9cbe6;"></div>
<div class="b" style="left:447.5px;top:368.78px;width:1px;height:15.82px;background:#b9cbe6;"></div>
<div class="b" style="left:262.5px;top:384.6px;width:1px;height:15.82px;background:#cbdae6;"></div>
<div class="b" style="left:299.5px;top:384.6px;width:1px;height:15.82px;background:#cbdae6;"></div>
<div class="b" style="left:336.5px;top:384.6px;width:1px;height:15.82px;background:#cbdae6;"></div>
<div class="b" style="left:373.5px;top:384.6px;width:1px;height:15.82px;background:#cbdae6;"></div>
<div class="b" style="left:410.5px;top:384.6px;width:1px;height:15.82px;background:#cbdae6;"></div>
<div class="b" style="left:447.5px;top:384.6px;width:1px;height:15.82px;background:#cbdae6;"></div>
<div class="b" style="left:226.6px;top:399.92px;width:262.4px;height:1px;background:#cbdae6;"></div>
<div class="b" style="left:262.5px;top:400.42px;width:1px;height:15.82px;background:#cbdae6;"></div>
<div class="b" style="left:299.5px;top:400.42px;width:1px;height:15.82px;background:#cbdae6;"></div>
<div class="b" style="left:336.5px;top:400.42px;width:1px;height:15.82px;background:#cbdae6;"></div>
<div class="b" style="left:373.5px;top:400.42px;width:1px;height:15.82px;background:#cbdae6;"></div>
<div class="b" style="left:410.5px;top:400.42px;width:1px;height:15.82px;background:#cbdae6;"></div>
<div class="b" style="left:447.5px;top:400.42px;width:1px;height:15.82px;background:#cbdae6;"></div>
<div class="b" style="left:226.6px;top:415.74px;width:262.4px;height:1px;background:#cbdae6;"></div>
<div class="b" style="left:262.5px;top:416.24px;width:1px;height:15.82px;background:#cbdae6;"></div>
<div class="b" style="left:299.5px;top:416.24px;width:1px;height:15.82px;background:#cbdae6;"></div>
<div class="b" style="left:336.5px;top:416.24px;width:1px;height:15.82px;background:#cbdae6;"></div>
<div class="b" style="left:373.5px;top:416.24px;width:1px;height:15.82px;background:#cbdae6;"></div>
<div class="b" style="left:410.5px;top:416.24px;width:1px;height:15.82px;background:#cbdae6;"></div>
<div class="b" style="left:447.5px;top:416.24px;width:1px;height:15.82px;background:#cbdae6;"></div>
<div class="b" style="left:226.6px;top:431.56px;width:262.4px;height:1px;background:#cbdae6;"></div>
<div class="b" style="left:262.5px;top:432.06px;width:1px;height:15.82px;background:#cbdae6;"></div>
<div class="b" style="left:299.5px;top:432.06px;width:1px;height:15.82px;background:#cbdae6;"></div>
<div class="b" style="left:336.5px;top:432.06px;width:1px;height:15.82px;background:#cbdae6;"></div>
<div class="b" style="left:373.5px;top:432.06px;width:1px;height:15.82px;background:#cbdae6;"></div>
<div class="b" style="left:410.5px;top:432.06px;width:1px;height:15.82px;background:#cbdae6;"></div>
<div class="b" style="left:447.5px;top:432.06px;width:1px;height:15.82px;background:#cbdae6;"></div>
<div class="b" style="left:226.6px;top:447.38px;width:262.4px;height:1px;background:#cbdae6;"></div>
<div class="b" style="left:262.5px;top:447.88px;width:1px;height:15.82px;background:#cbdae6;"></div>
<div class="b" style="left:299.5px;top:447.88px;width:1px;height:15.82px;background:#cbdae6;"></div>
<div class="b" style="left:336.5px;top:447.88px;width:1px;height:15.82px;background:#cbdae6;"></div>
<div class="b" style="left:373.5px;top:447.88px;width:1px;height:15.82px;background:#cbdae6;"></div>
<div class="b" style="left:410.5px;top:447.88px;width:1px;height:15.82px;background:#cbdae6;"></div>
<div class="b" style="left:447.5px;top:447.88px;width:1px;height:15.82px;background:#cbdae6;"></div>
<div class="b" style="left:226.6px;top:463.2px;width:262.4px;height:1px;background:#cbdae6;"></div>
<div class="b" style="left:262.5px;top:463.7px;width:1px;height:15.82px;background:#cbdae6;"></div>
<div class="b" style="left:299.5px;top:463.7px;width:1px;height:15.82px;background:#cbdae6;"></div>
<div class="b" style="left:336.5px;top:463.7px;width:1px;height:15.82px;background:#cbdae6;"></div>
<div class="b" style="left:373.5px;top:463.7px;width:1px;height:15.82px;background:#cbdae6;"></div>
<div class="b" style="left:410.5px;top:463.7px;width:1px;height:15.82px;background:#cbdae6;"></div>
<div class="b" style="left:447.5px;top:463.7px;width:1px;height:15.82px;background:#cbdae6;"></div>
<div class="b" style="left:226.6px;top:479.02px;width:262.4px;height:1px;background:#cbdae6;"></div>
<div class="b" style="left:262.5px;top:479.52px;width:1px;height:15.82px;background:#cbdae6;"></div>
<div class="b" style="left:299.5px;top:479.52px;width:1px;height:15.82px;background:#cbdae6;"></div>
<div class="b" style="left:336.5px;top:479.52px;width:1px;height:15.82px;background:#cbdae6;"></div>
<div class="b" style="left:373.5px;top:479.52px;width:1px;height:15.82px;background:#cbdae6;"></div>
<div class="b" style="left:410.5px;top:479.52px;width:1px;height:15.82px;background:#cbdae6;"></div>
<div class="b" style="left:447.5px;top:479.52px;width:1px;height:15.82px;background:#cbdae6;"></div>
<div class="b" style="left:226.6px;top:494.84px;width:262.4px;height:1px;background:#cbdae6;"></div>
<div class="b" style="left:262.5px;top:495.34px;width:1px;height:15.82px;background:#cbdae6;"></div>
<div class="b" style="left:299.5px;top:495.34px;width:1px;height:15.82px;background:#cbdae6;"></div>
<div class="b" style="left:336.5px;top:495.34px;width:1px;height:15.82px;background:#cbdae6;"></div>
<div class="b" style="left:373.5px;top:495.34px;width:1px;height:15.82px;background:#cbdae6;"></div>
<div class="b" style="left:410.5px;top:495.34px;width:1px;height:15.82px;background:#cbdae6;"></div>
<div class="b" style="left:447.5px;top:495.34px;width:1px;height:15.82px;background:#cbdae6;"></div>
<div class="b" style="left:226.6px;top:510.66px;width:262.4px;height:1px;background:#cbdae6;"></div>
<div class="b" style="left:262.5px;top:511.16px;width:1px;height:15.82px;background:#cbdae6;"></div>
<div class="b" style="left:299.5px;top:511.16px;width:1px;height:15.82px;background:#cbdae6;"></div>
<div class="b" style="left:336.5px;top:511.16px;width:1px;height:15.82px;background:#cbdae6;"></div>
<div class="b" style="left:373.5px;top:511.16px;width:1px;height:15.82px;background:#cbdae6;"></div>
<div class="b" style="left:410.5px;top:511.16px;width:1px;height:15.82px;background:#cbdae6;"></div>
<div class="b" style="left:447.5px;top:511.16px;width:1px;height:15.82px;background:#cbdae6;"></div>
<div class="b" style="left:226.6px;top:526.48px;width:262.4px;height:1px;background:#cbdae6;"></div>
<div class="b" style="left:262.5px;top:526.98px;width:1px;height:15.82px;background:#cbdae6;"></div>
<div class="b" style="left:299.5px;top:526.98px;width:1px;height:15.82px;background:#cbdae6;"></div>
<div class="b" style="left:336.5px;top:526.98px;width:1px;height:15.82px;background:#cbdae6;"></div>
<div class="b" style="left:373.5px;top:526.98px;width:1px;height:15.82px;background:#cbdae6;"></div>
<div class="b" style="left:410.5px;top:526.98px;width:1px;height:15.82px;background:#cbdae6;"></div>
<div class="b" style="left:447.5px;top:526.98px;width:1px;height:15.82px;background:#cbdae6;"></div>
<div class="b" style="left:226.6px;top:542.3px;width:262.4px;height:1px;background:#cbdae6;"></div>
<div class="b" style="left:262.5px;top:542.8px;width:1px;height:15.82px;background:#cbdae6;"></div>
<div class="b" style="left:299.5px;top:542.8px;width:1px;height:15.82px;background:#cbdae6;"></div>
<div class="b" style="left:336.5px;top:542.8px;width:1px;height:15.82px;background:#cbdae6;"></div>
<div class="b" style="left:373.5px;top:542.8px;width:1px;height:15.82px;background:#cbdae6;"></div>
<div class="b" style="left:410.5px;top:542.8px;width:1px;height:15.82px;background:#cbdae6;"></div>
<div class="b" style="left:447.5px;top:542.8px;width:1px;height:15.82px;background:#cbdae6;"></div>
<div class="b" style="left:226.6px;top:558.12px;width:262.4px;height:1px;background:#cbdae6;"></div>
<div class="b" style="left:262.5px;top:558.62px;width:1px;height:15.82px;background:#cbdae6;"></div>
<div class="b" style="left:299.5px;top:558.62px;width:1px;height:15.82px;background:#cbdae6;"></div>
<div class="b" style="left:336.5px;top:558.62px;width:1px;height:15.82px;background:#cbdae6;"></div>
<div class="b" style="left:373.5px;top:558.62px;width:1px;height:15.82px;background:#cbdae6;"></div>
<div class="b" style="left:410.5px;top:558.62px;width:1px;height:15.82px;background:#cbdae6;"></div>
<div class="b" style="left:447.5px;top:558.62px;width:1px;height:15.82px;background:#cbdae6;"></div>
<div class="b" style="left:226.6px;top:573.94px;width:262.4px;height:1px;background:#cbdae6;"></div>
<div class="b" style="left:262.5px;top:574.44px;width:1px;height:15.82px;background:#cbdae6;"></div>
<div class="b" style="left:299.5px;top:574.44px;width:1px;height:15.82px;background:#cbdae6;"></div>
<div class="b" style="left:336.5px;top:574.44px;width:1px;height:15.82px;background:#cbdae6;"></div>
<div class="b" style="left:373.5px;top:574.44px;width:1px;height:15.82px;background:#cbdae6;"></div>
<div class="b" style="left:410.5px;top:574.44px;width:1px;height:15.82px;background:#cbdae6;"></div>
<div class="b" style="left:447.5px;top:574.44px;width:1px;height:15.82px;background:#cbdae6;"></div>
<div class="b" style="left:226.6px;top:589.76px;width:262.4px;height:1px;background:#cbdae6;"></div>
<div class="t" style="left:234.87px;top:309px;font-size:10.8px;letter-spacing:-0.35px;color:#e0333b;">54.60</div>
<div class="t" style="left:268.63px;top:309px;font-size:10.8px;letter-spacing:-0.35px;color:#1f2638;">-25.55</div>
<div class="t" style="left:311.78px;top:309px;font-size:10.8px;letter-spacing:-0.35px;color:#1f2638;">-1.39</div>
<div class="t" style="left:234.87px;top:325px;font-size:10.8px;letter-spacing:-0.35px;color:#e0333b;">50.70</div>
<div class="t" style="left:268.63px;top:325px;font-size:10.8px;letter-spacing:-0.35px;color:#1f2638;">-23.70</div>
<div class="t" style="left:311.78px;top:325px;font-size:10.8px;letter-spacing:-0.35px;color:#1f2638;">-1.38</div>
<div class="t" style="left:234.87px;top:341px;font-size:10.8px;letter-spacing:-0.35px;color:#e0333b;">47.10</div>
<div class="t" style="left:268.63px;top:341px;font-size:10.8px;letter-spacing:-0.35px;color:#1f2638;">-22.00</div>
<div class="t" style="left:311.78px;top:341px;font-size:10.8px;letter-spacing:-0.35px;color:#1f2638;">-1.36</div>
<div class="t" style="left:234.87px;top:356px;font-size:10.8px;letter-spacing:-0.35px;color:#e0333b;">43.80</div>
<div class="t" style="left:268.63px;top:356px;font-size:10.8px;letter-spacing:-0.35px;color:#1f2638;">-20.43</div>
<div class="t" style="left:311.78px;top:356px;font-size:10.8px;letter-spacing:-0.35px;color:#1f2638;">-1.34</div>
<div class="t" style="left:234.87px;top:372px;font-size:10.8px;letter-spacing:-0.35px;color:#e0333b;">40.70</div>
<div class="t" style="left:268.63px;top:372px;font-size:10.8px;letter-spacing:-0.35px;color:#1f2638;">-18.96</div>
<div class="t" style="left:311.78px;top:372px;font-size:10.8px;letter-spacing:-0.35px;color:#1f2638;">-1.32</div>
<div class="t" style="left:234.87px;top:388px;font-size:10.8px;letter-spacing:-0.35px;color:#e0333b;">37.90</div>
<div class="t" style="left:268.63px;top:388px;font-size:10.8px;letter-spacing:-0.35px;color:#1f2638;">-17.62</div>
<div class="t" style="left:311.78px;top:388px;font-size:10.8px;letter-spacing:-0.35px;color:#1f2638;">-1.29</div>
<div class="t" style="left:234.87px;top:404px;font-size:10.8px;letter-spacing:-0.35px;color:#e0333b;">35.30</div>
<div class="t" style="left:268.63px;top:404px;font-size:10.8px;letter-spacing:-0.35px;color:#1f2638;">-16.38</div>
<div class="t" style="left:311.78px;top:404px;font-size:10.8px;letter-spacing:-0.35px;color:#1f2638;">-1.27</div>
<div class="t" style="left:234.87px;top:420px;font-size:10.8px;letter-spacing:-0.35px;color:#1f8f2e;">32.90</div>
<div class="t" style="left:268.63px;top:420px;font-size:10.8px;letter-spacing:-0.35px;color:#1f2638;">-15.24</div>
<div class="t" style="left:311.78px;top:420px;font-size:10.8px;letter-spacing:-0.35px;color:#1f2638;">-1.24</div>
<div class="t" style="left:234.87px;top:467px;font-size:10.8px;letter-spacing:-0.35px;color:#e0333b;">26.75</div>
<div class="t" style="left:268.63px;top:467px;font-size:10.8px;letter-spacing:-0.35px;color:#1f2638;">-12.29</div>
<div class="t" style="left:311.78px;top:467px;font-size:10.8px;letter-spacing:-0.35px;color:#1f2638;">-1.14</div>
<div class="t" style="left:234.87px;top:530px;font-size:10.8px;letter-spacing:-0.35px;color:#e0333b;">20.65</div>
<div class="t" style="left:274.28px;top:530px;font-size:10.8px;letter-spacing:-0.35px;color:#1f2638;">-9.34</div>
<div class="t" style="left:311.78px;top:530px;font-size:10.8px;letter-spacing:-0.35px;color:#1f2638;">-1.02</div>
<div class="b" style="left:489px;top:305.5px;width:14.5px;height:284.1px;background:#d4dbeb;"></div>
<svg class="b" style="left:0;top:0" width="1080" height="675"><path d="M493.5 314.5 L496.5 311.3 L499.5 314.5 Z" fill="#6d7890"/></svg>
<svg class="b" style="left:0;top:0" width="1080" height="675"><path d="M493.5 581.5 L496.5 584.7 L499.5 581.5 Z" fill="#6d7890"/></svg>
<div class="b" style="left:491.5px;top:418px;width:9.5px;height:20px;background:#7d879c;"></div>
<div class="b" style="left:505.6px;top:136.2px;width:10px;height:540px;background:#d9dfed;"></div>
<div class="b" style="left:509.5px;top:136.2px;width:5px;height:540px;background:#d3d9e8;"></div>
<svg class="b" style="left:0;top:0" width="1080" height="675"><rect x="509.8" y="398.15" width="1.2" height="1.2" fill="#9fa9be"/><rect x="512.2" y="399.35" width="1.2" height="1.2" fill="#9fa9be"/><rect x="509.8" y="401.05" width="1.2" height="1.2" fill="#9fa9be"/><rect x="512.2" y="402.25" width="1.2" height="1.2" fill="#9fa9be"/><rect x="509.8" y="403.95" width="1.2" height="1.2" fill="#9fa9be"/><rect x="512.2" y="405.15" width="1.2" height="1.2" fill="#9fa9be"/><rect x="509.8" y="406.85" width="1.2" height="1.2" fill="#9fa9be"/><rect x="512.2" y="408.05" width="1.2" height="1.2" fill="#9fa9be"/></svg>
<div class="b" style="left:0px;top:601.3px;width:505px;height:2px;background:#dfe4f0;"></div>
<div class="t" style="left:0px;top:606px;font-size:10.8px;letter-spacing:-0.51px;color:#1f2638;">ed</div>
<div class="b" style="left:-2px;top:603px;width:94px;height:15.5px;background:#ffffff;border:1px solid #b2bccf;"></div>
<div class="t" style="left:0px;top:606px;font-size:10.8px;letter-spacing:-0.51px;color:#1f2638;">ed</div>
<svg class="b" style="left:82px;top:609px" width="7" height="5"><g transform="translate(0.5 0)"><path d="M0.3 0.3 H5.7 L3 3.6 Z" fill="#4a556e"/></g></svg>
<div class="b" style="left:100px;top:603px;width:68.5px;height:15.5px;background:#ffffff;border:1px solid #b2bccf;"></div>
<div class="t" style="left:103.5px;top:606px;font-size:10.8px;letter-spacing:-0.55px;color:#1f2638;">Auto</div>
<svg class="b" style="left:158px;top:609px" width="7" height="5"><g transform="translate(0 0)"><path d="M0.3 0.3 H5.7 L3 3.6 Z" fill="#4a556e"/></g></svg>
<div class="b" style="left:386px;top:609px;width:8.5px;height:8.5px;background:#ffffff;border:1px solid #b4bccd;"></div>
<div class="t" style="left:399px;top:608px;font-size:10.8px;letter-spacing:-0.13px;color:#1f2638;">Ignore Today's Trades</div>
<div class="b" style="left:-1px;top:622.5px;width:505.5px;height:49.5px;background:#ffffff;"></div>
<div class="b" style="left:-1px;top:622.5px;width:505.5px;height:17.5px;background:#f4f6fb;"></div>
<div class="b" style="left:28.5px;top:622.5px;width:1px;height:17.5px;background:#dfe4ef;"></div>
<div class="b" style="left:75.5px;top:622.5px;width:1px;height:17.5px;background:#dfe4ef;"></div>
<div class="b" style="left:123.5px;top:622.5px;width:1px;height:17.5px;background:#dfe4ef;"></div>
<div class="b" style="left:170.5px;top:622.5px;width:1px;height:17.5px;background:#dfe4ef;"></div>
<div class="b" style="left:218.5px;top:622.5px;width:1px;height:17.5px;background:#dfe4ef;"></div>
<div class="b" style="left:265.5px;top:622.5px;width:1px;height:17.5px;background:#dfe4ef;"></div>
<div class="b" style="left:314px;top:622.5px;width:1px;height:17.5px;background:#dfe4ef;"></div>
<div class="b" style="left:361px;top:622.5px;width:1px;height:17.5px;background:#dfe4ef;"></div>
<div class="b" style="left:408.5px;top:622.5px;width:1px;height:17.5px;background:#dfe4ef;"></div>
<div class="b" style="left:455.5px;top:622.5px;width:1px;height:17.5px;background:#dfe4ef;"></div>
<div class="t" style="left:-1px;top:626px;font-size:10.8px;letter-spacing:-1.43px;color:#3a4258;">Cost</div>
<div class="t" style="left:35px;top:626px;font-size:10.8px;letter-spacing:-0.48px;color:#3a4258;">Curr C...</div>
<div class="t" style="left:81px;top:626px;font-size:10.8px;letter-spacing:-0.34px;color:#3a4258;">Commi...</div>
<div class="t" style="left:139.5px;top:626px;font-size:10.8px;letter-spacing:-1.07px;color:#3a4258;">PnL</div>
<div class="t" style="left:182px;top:626px;font-size:10.8px;letter-spacing:-0.58px;color:#3a4258;">PnL%</div>
<div class="t" style="left:231.5px;top:626px;font-size:10.8px;letter-spacing:-0.54px;color:#3a4258;">Delta</div>
<div class="t" style="left:272.5px;top:626px;font-size:10.8px;letter-spacing:-0.58px;color:#3a4258;">Gamma</div>
<div class="t" style="left:326px;top:626px;font-size:10.8px;letter-spacing:-0.52px;color:#3a4258;">Theta</div>
<div class="t" style="left:374px;top:626px;font-size:10.8px;letter-spacing:-0.28px;color:#3a4258;">Vega</div>
<div class="t" style="left:424px;top:626px;font-size:10.8px;letter-spacing:0.03px;color:#3a4258;">T/D</div>
<div class="t" style="left:473px;top:626px;font-size:10.8px;letter-spacing:-0.53px;color:#3a4258;">Plot</div>
<div class="b" style="left:28.5px;top:640px;width:1px;height:32px;background:#e1e6f0;"></div>
<div class="b" style="left:75.5px;top:640px;width:1px;height:32px;background:#e1e6f0;"></div>
<div class="b" style="left:123.5px;top:640px;width:1px;height:32px;background:#e1e6f0;"></div>
<div class="b" style="left:170.5px;top:640px;width:1px;height:32px;background:#e1e6f0;"></div>
<div class="b" style="left:218.5px;top:640px;width:1px;height:32px;background:#e1e6f0;"></div>
<div class="b" style="left:265.5px;top:640px;width:1px;height:32px;background:#e1e6f0;"></div>
<div class="b" style="left:314px;top:640px;width:1px;height:32px;background:#e1e6f0;"></div>
<div class="b" style="left:361px;top:640px;width:1px;height:32px;background:#e1e6f0;"></div>
<div class="b" style="left:408.5px;top:640px;width:1px;height:32px;background:#e1e6f0;"></div>
<div class="b" style="left:455.5px;top:640px;width:1px;height:32px;background:#e1e6f0;"></div>
<div class="b" style="left:-1px;top:639.5px;width:505.5px;height:1px;background:#dfe4ef;"></div>
<div class="b" style="left:-1px;top:655.5px;width:505.5px;height:1px;background:#e1e6f0;"></div>
<div class="b" style="left:-1px;top:671.5px;width:505.5px;height:1px;background:#c9d1e2;"></div>
<div class="t" style="left:-4.78px;top:643px;font-size:10.8px;letter-spacing:-0.35px;color:#1f2638;">909.80</div>
<div class="t" style="left:34.41px;top:643px;font-size:10.8px;letter-spacing:-0.35px;color:#1f2638;">1,160.00</div>
<div class="t" style="left:101.53px;top:643px;font-size:10.8px;letter-spacing:-0.35px;color:#1f2638;">4.80</div>
<div class="t" style="left:137.72px;top:643px;font-size:10.8px;letter-spacing:-0.35px;color:#1f8f2e;">250.20</div>
<div class="t" style="left:181.12px;top:643px;font-size:10.8px;letter-spacing:-0.35px;color:#1f8f2e;">27.50%</div>
<div class="t" style="left:240.28px;top:643px;font-size:10.8px;letter-spacing:-0.35px;color:#1f2638;">-5.54</div>
<div class="t" style="left:291.53px;top:643px;font-size:10.8px;letter-spacing:-0.35px;color:#1f2638;">0.02</div>
<div class="t" style="left:338.53px;top:643px;font-size:10.8px;letter-spacing:-0.35px;color:#1f2638;">5.94</div>
<div class="t" style="left:380.87px;top:643px;font-size:10.8px;letter-spacing:-0.35px;color:#1f2638;">47.16</div>
<div class="t" style="left:439.19px;top:643px;font-size:10.8px;letter-spacing:-0.35px;color:#1f2638;">1.1</div>
<div class="t" style="left:-4.78px;top:659px;font-size:10.8px;letter-spacing:-0.35px;color:#1f2638;">527.20</div>
<div class="t" style="left:42.72px;top:659px;font-size:10.8px;letter-spacing:-0.35px;color:#1f2638;">775.00</div>
<div class="t" style="left:101.53px;top:659px;font-size:10.8px;letter-spacing:-0.35px;color:#1f2638;">7.20</div>
<div class="t" style="left:137.72px;top:659px;font-size:10.8px;letter-spacing:-0.35px;color:#1f8f2e;">247.80</div>
<div class="t" style="left:186.78px;top:659px;font-size:10.8px;letter-spacing:-0.35px;color:#1f8f2e;">8.17%</div>
<div class="t" style="left:240.28px;top:659px;font-size:10.8px;letter-spacing:-0.35px;color:#1f2638;">-3.67</div>
<div class="t" style="left:291.53px;top:659px;font-size:10.8px;letter-spacing:-0.35px;color:#1f2638;">0.01</div>
<div class="t" style="left:338.53px;top:659px;font-size:10.8px;letter-spacing:-0.35px;color:#1f2638;">7.25</div>
<div class="t" style="left:380.87px;top:659px;font-size:10.8px;letter-spacing:-0.35px;color:#1f2638;">23.18</div>
<div class="t" style="left:447.49px;top:659px;font-size:10.8px;letter-spacing:-0.35px;color:#1f2638;">2</div>
<svg class="b" style="left:476px;top:643px" width="10" height="10"><g transform="translate(0 0.5)"><rect x="0.5" y="0.5" width="8" height="8" fill="#fff" stroke="#a9b0bf"/><path d="M2 4.5 L3.8 6.5 L7 2" fill="none" stroke="#6b7386" stroke-width="1.1"/></g></svg>
<svg class="b" style="left:476px;top:659px" width="10" height="10"><g transform="translate(0 0.5)"><rect x="0.5" y="0.5" width="8" height="8" fill="#fff" stroke="#a9b0bf"/><path d="M2 4.5 L3.8 6.5 L7 2" fill="none" stroke="#6b7386" stroke-width="1.1"/></g></svg>
<div class="b" style="left:516px;top:136.2px;width:564px;height:46px;background:#dde2ef;"></div>
<div class="b" style="left:514.6px;top:136.2px;width:1.6px;height:540px;background:#e6eaf3;"></div>
<div class="b" style="left:580.5px;top:158.5px;width:500px;height:1px;background:#aab4c9;"></div>
<div class="b" style="left:516px;top:137.5px;width:65px;height:22px;background:#dde2ef;border:1px solid #aab4c9;border-bottom:none;border-left:none;"></div>
<div class="t" style="left:525px;top:143px;font-size:10.8px;letter-spacing:-0.54px;color:#1f2638;">Risk Chart</div>
<div class="b" style="left:580.5px;top:137.5px;width:67.5px;height:21.5px;background:#d4daea;border:1px solid #aab4c9;border-left:none;"></div>
<div class="t" style="left:589.5px;top:143px;font-size:10.8px;letter-spacing:-0.55px;color:#1f2638;">Price Chart</div>
<div class="b" style="left:647.5px;top:137.5px;width:106px;height:21.5px;background:#d4daea;border:1px solid #aab4c9;border-left:none;"></div>
<div class="t" style="left:657px;top:143px;font-size:10.8px;letter-spacing:-0.38px;color:#1f2638;">Movement Analysis</div>
<div class="b" style="left:753px;top:137.5px;width:54.5px;height:21.5px;background:#d4daea;border:1px solid #aab4c9;border-left:none;"></div>
<div class="t" style="left:763px;top:143px;font-size:10.8px;letter-spacing:-0.51px;color:#1f2638;">Volatility</div>
<div class="b" style="left:807px;top:137.5px;width:135.2px;height:21.5px;background:#d4daea;border:1px solid #aab4c9;border-left:none;"></div>
<div class="t" style="left:817.5px;top:143px;font-size:10.8px;letter-spacing:-0.41px;color:#1f2638;">Statistics &amp; Fundamentals</div>
<div class="t" style="left:520.5px;top:166px;font-size:10.8px;letter-spacing:-0.29px;color:#1f2638;">Vol Adjust</div>
<div class="b" style="left:569.5px;top:162.5px;width:45px;height:16px;background:#ffffff;border:1px solid #b2bccf;"></div>
<div class="t" style="left:591.99px;top:166px;font-size:10.8px;letter-spacing:-0.35px;color:#1f2638;">0</div>
<svg class="b" style="left:604px;top:165px" width="7" height="12"><g transform="translate(0.5 0.5)"><path d="M0.5 3.5 L3 0.7 L5.5 3.5 Z M0.5 7.5 L3 10.3 L5.5 7.5 Z" fill="#4a556e"/></g></svg>
<div class="t" style="left:991px;top:166px;font-size:10.8px;letter-spacing:-0.5px;color:#1f2638;">Projection</div>
<div class="b" style="left:1039px;top:162.5px;width:50px;height:16px;background:#ffffff;border:1px solid #b2bccf;"></div>
<div class="t" style="left:1042px;top:166px;font-size:10.8px;letter-spacing:-0.38px;color:#1f2638;">04/08/20</div>
<div class="b" style="left:516px;top:181.5px;width:564px;height:307px;background:#ffffff;"></div>
<svg class="b" style="left:0;top:0" width="1080" height="675" font-size="9">
<rect x="744.56" y="197.5" width="227.23" height="273.75" fill="#92cddc"/>
<rect x="801.36" y="197.5" width="113.61" height="273.75" fill="#4f81bd"/>
<path d="M603.5 194.5 V474.25 M657 194.5 V474.25 M710.5 194.5 V474.25 M764 194.5 V474.25 M817.5 194.5 V474.25 M871 194.5 V474.25 M924.5 194.5 V474.25 M978 194.5 V474.25 M1031.5 194.5 V474.25 M559.7 197.5 H1080 M559.7 224.88 H1080 M559.7 252.25 H1080 M559.7 279.62 H1080 M559.7 307 H1080 M559.7 334.38 H1080 M559.7 361.75 H1080 M559.7 389.12 H1080 M559.7 416.5 H1080 M559.7 443.88 H1080 M559.7 471.25 H1080 " stroke="#e2e2e2" stroke-opacity="0.8" stroke-width="1" fill="none"/>
<path d="M563.7 197.5 V471.25" stroke="#d0d0d0" stroke-width="1" fill="none"/>
<text transform="translate(754.36 232.5) rotate(-90)" fill="#5b8fc9" font-size="9" textLength="31.07" lengthAdjust="spacingAndGlyphs">6131.83</text>
<text transform="translate(811.16 232.5) rotate(-90)" fill="#86aee0" font-size="9" textLength="31.07" lengthAdjust="spacingAndGlyphs">6184.92</text>
<text transform="translate(915.38 232.5) rotate(-90)" fill="#86aee0" font-size="9" textLength="31.07" lengthAdjust="spacingAndGlyphs">6291.10</text>
<text transform="translate(972.18 232.5) rotate(-90)" fill="#5b8fc9" font-size="9" textLength="31.07" lengthAdjust="spacingAndGlyphs">6344.19</text>
<text x="558" y="200.8" text-anchor="end" fill="#2b2b2b" font-size="9" textLength="21.98" lengthAdjust="spacingAndGlyphs">879%</text>
<text x="558" y="228.18" text-anchor="end" fill="#2b2b2b" font-size="9" textLength="21.98" lengthAdjust="spacingAndGlyphs">769%</text>
<text x="558" y="255.55" text-anchor="end" fill="#2b2b2b" font-size="9" textLength="21.98" lengthAdjust="spacingAndGlyphs">659%</text>
<text x="558" y="282.93" text-anchor="end" fill="#2b2b2b" font-size="9" textLength="21.98" lengthAdjust="spacingAndGlyphs">550%</text>
<text x="558" y="310.3" text-anchor="end" fill="#2b2b2b" font-size="9" textLength="21.98" lengthAdjust="spacingAndGlyphs">440%</text>
<text x="558" y="337.68" text-anchor="end" fill="#2b2b2b" font-size="9" textLength="21.98" lengthAdjust="spacingAndGlyphs">330%</text>
<text x="558" y="365.05" text-anchor="end" fill="#2b2b2b" font-size="9" textLength="21.98" lengthAdjust="spacingAndGlyphs">220%</text>
<text x="558" y="392.43" text-anchor="end" fill="#2b2b2b" font-size="9" textLength="21.35" lengthAdjust="spacingAndGlyphs">110%</text>
<text x="558" y="419.8" text-anchor="end" fill="#2b2b2b" font-size="9" textLength="12.42" lengthAdjust="spacingAndGlyphs">0%</text>
<text x="558" y="447.18" text-anchor="end" fill="#2b2b2b" font-size="9" textLength="24.21" lengthAdjust="spacingAndGlyphs">-110%</text>
<text x="558" y="474.55" text-anchor="end" fill="#2b2b2b" font-size="9" textLength="24.85" lengthAdjust="spacingAndGlyphs">-220%</text>
<text x="603.5" y="193" text-anchor="middle" fill="#2b2b2b" font-size="9" textLength="22.45" lengthAdjust="spacingAndGlyphs">-3.8%</text>
<text x="657" y="193" text-anchor="middle" fill="#2b2b2b" font-size="9" textLength="22.45" lengthAdjust="spacingAndGlyphs">-3.0%</text>
<text x="710.5" y="193" text-anchor="middle" fill="#2b2b2b" font-size="9" textLength="22.45" lengthAdjust="spacingAndGlyphs">-2.2%</text>
<text x="764" y="193" text-anchor="middle" fill="#2b2b2b" font-size="9" textLength="22.45" lengthAdjust="spacingAndGlyphs">-1.4%</text>
<text x="817.5" y="193" text-anchor="middle" fill="#2b2b2b" font-size="9" textLength="22.45" lengthAdjust="spacingAndGlyphs">-0.6%</text>
<text x="871" y="193" text-anchor="middle" fill="#2b2b2b" font-size="9" textLength="19.59" lengthAdjust="spacingAndGlyphs">0.2%</text>
<text x="924.5" y="193" text-anchor="middle" fill="#2b2b2b" font-size="9" textLength="19.59" lengthAdjust="spacingAndGlyphs">1.0%</text>
<text x="978" y="193" text-anchor="middle" fill="#2b2b2b" font-size="9" textLength="19.59" lengthAdjust="spacingAndGlyphs">1.8%</text>
<text x="1031.5" y="193" text-anchor="middle" fill="#2b2b2b" font-size="9" textLength="19.59" lengthAdjust="spacingAndGlyphs">2.6%</text>
<text x="1085" y="193" text-anchor="middle" fill="#2b2b2b" font-size="9" textLength="19.59" lengthAdjust="spacingAndGlyphs">3.4%</text>
<text x="603.5" y="484" text-anchor="middle" fill="#2b2b2b" font-size="9" textLength="19.12" lengthAdjust="spacingAndGlyphs">6000</text>
<text x="657" y="484" text-anchor="middle" fill="#2b2b2b" font-size="9" textLength="19.12" lengthAdjust="spacingAndGlyphs">6050</text>
<text x="710.5" y="484" text-anchor="middle" fill="#2b2b2b" font-size="9" textLength="19.12" lengthAdjust="spacingAndGlyphs">6100</text>
<text x="764" y="484" text-anchor="middle" fill="#2b2b2b" font-size="9" textLength="19.12" lengthAdjust="spacingAndGlyphs">6150</text>
<text x="817.5" y="484" text-anchor="middle" fill="#2b2b2b" font-size="9" textLength="19.12" lengthAdjust="spacingAndGlyphs">6200</text>
<text x="871" y="484" text-anchor="middle" fill="#2b2b2b" font-size="9" textLength="19.12" lengthAdjust="spacingAndGlyphs">6250</text>
<text x="924.5" y="484" text-anchor="middle" fill="#2b2b2b" font-size="9" textLength="19.12" lengthAdjust="spacingAndGlyphs">6300</text>
<text x="978" y="484" text-anchor="middle" fill="#2b2b2b" font-size="9" textLength="19.12" lengthAdjust="spacingAndGlyphs">6350</text>
<text x="1031.5" y="484" text-anchor="middle" fill="#2b2b2b" font-size="9" textLength="19.12" lengthAdjust="spacingAndGlyphs">6400</text>
<text x="1085" y="484" text-anchor="middle" fill="#2b2b2b" font-size="9" textLength="19.12" lengthAdjust="spacingAndGlyphs">6450</text>
<rect x="845.5" y="182" width="25" height="10.3" fill="#e7edf7" stroke="#6f7c94" stroke-width="1"/>
<text x="858" y="190.6" text-anchor="middle" fill="#444" font-size="9" textLength="19.59" lengthAdjust="spacingAndGlyphs">0.0%</text>
<path d="M858 409.6 C872 411 859.33 410 900 413.8 C940.67 417.6 920 416.27 980 421 C1040 425.73 1046.67 425.67 1080 428" stroke="#f46c6c" stroke-width="1.1" fill="none"/>
<path d="M858 409.4 C872 410.67 859.33 410.13 900 413.2 C940.67 416.27 920 415.17 980 418.6 C1040 422.03 1046.67 421.87 1080 423.5" stroke="#f46c6c" stroke-width="1.1" fill="none"/>
<path d="M564 320 C584.33 327.23 576.33 325.03 625 341.7 C673.67 358.37 658.33 353.07 710 370 C761.67 386.93 741.67 381.27 780 392.5 C818.33 403.73 785 395.7 825 403.7 C865 411.7 848.33 408.73 900 416.5 C951.67 424.27 920 420.4 980 427 C1040 433.6 1046.67 433.2 1080 436.3" stroke="#f46c6c" stroke-width="1.1" fill="none"/>
<path d="M564 345.5 C584.33 350.57 576.33 349.03 625 360.7 C673.67 372.37 658.33 368.63 710 380.5 C761.67 392.37 741.67 388.47 780 396.3 C818.33 404.13 785 397.83 825 404 C865 410.17 848.33 408.3 900 414.8 C951.67 421.3 920 417.93 980 423.5 C1040 429.07 1046.67 428.83 1080 431.5" stroke="#f46c6c" stroke-width="1.1" fill="none"/>
<path d="M564 355 C584.33 358.77 576.33 356.63 625 366.3 C673.67 375.97 658.33 373.67 710 384 C761.67 394.33 741.67 390.47 780 397.3 C818.33 404.13 785 399.1 825 404.5 C865 409.9 848.33 408.77 900 413.5 C951.67 418.23 953.33 416.97 980 418.7" stroke="#5fe05f" stroke-width="1.1" fill="none"/>
<path d="M564 374.5 C584.33 377.17 576.33 376.2 625 382.5 C673.67 388.8 658.33 387.13 710 393.4 C761.67 399.67 741.67 397.2 780 401.3 C818.33 405.4 785 401.83 825 405.7 C865 409.57 848.33 408.67 900 412.9 C951.67 417.13 953.33 416.57 980 418.4" stroke="#5fe05f" stroke-width="1.1" fill="none"/>
<path d="M563.7 261 L627 424 L629 430 H1080" stroke="#1d8a1d" stroke-width="1.6" fill="none" stroke-linejoin="round"/>
<path d="M563.7 203 L655 433 L658 440.6 H1080" stroke="#4a4fd0" stroke-width="1.6" fill="none" stroke-linejoin="round"/>
<path d="M563.7 415.8 H1080" stroke="#686868" stroke-width="1.4" fill="none"/>
<path d="M624.5 197.5 V471" stroke="#a040a0" stroke-width="1.1" stroke-dasharray="3 3" fill="none"/>
<path d="M831 405 L910 416" stroke="#a8907f" stroke-opacity="0.8" stroke-width="3.8" fill="none"/>
<circle cx="858" cy="409.7" r="2.8" fill="#3fc8c0" stroke="#23506a" stroke-width="1"/>
<text x="875" y="463.3" fill="#7a30b0" font-size="9" textLength="24.37" lengthAdjust="spacingAndGlyphs">77.0%</text>
<rect x="521" y="403.7" width="39" height="10.2" fill="#0a8a0a"/>
<text x="557.5" y="412.2" text-anchor="end" fill="#fff" font-size="9" textLength="17.2" lengthAdjust="spacingAndGlyphs">27%</text>
<rect x="567.5" y="201" width="138.5" height="83" rx="4" fill="#e9eef6" fill-opacity="0.86" stroke="#9ba8bd" stroke-width="1"/>
<rect x="574" y="208.7" width="2.8" height="10.6" fill="#e03a3a"/>
<text x="577.3" y="217.4" fill="#6a6a6a" font-size="9.6" textLength="75" lengthAdjust="spacingAndGlyphs">-4.80 Realized PnL</text>
<rect x="574" y="220.4" width="2.8" height="10.6" fill="#44d044"/>
<text x="577" y="229.1" fill="#5a5a5a" font-size="9.6" textLength="7.8" lengthAdjust="spacingAndGlyphs">-1</text>
<text x="588" y="229.1" fill="#f06262" font-size="9.6" textLength="73.6" lengthAdjust="spacingAndGlyphs">05sep. 6050 Put Δ</text>
<text x="696.7" y="229.1" fill="#f06262" font-size="9.6" text-anchor="end" textLength="24.5" lengthAdjust="spacingAndGlyphs">-25.31</text>
<rect x="574" y="232.1" width="2.8" height="10.6" fill="#44d044"/>
<text x="577" y="240.8" fill="#5a5a5a" font-size="9.6" textLength="10.6" lengthAdjust="spacingAndGlyphs">+1</text>
<text x="590.5" y="240.8" fill="#5c5cf0" font-size="9.6" textLength="73.6" lengthAdjust="spacingAndGlyphs">05sep. 6025 Put Δ</text>
<text x="699" y="240.8" fill="#5c5cf0" font-size="9.6" text-anchor="end" textLength="24.5" lengthAdjust="spacingAndGlyphs">-23.44</text>
<rect x="574" y="243.8" width="2.8" height="10.6" fill="#8fb2ea"/>
<text x="577" y="252.5" fill="#5a5a5a" font-size="9.6" textLength="10.6" lengthAdjust="spacingAndGlyphs">+1</text>
<text x="590.5" y="252.5" fill="#5c5cf0" font-size="9.6" textLength="73.6" lengthAdjust="spacingAndGlyphs">05sep. 5650 Put Δ</text>
<text x="699" y="252.5" fill="#5c5cf0" font-size="9.6" text-anchor="end" textLength="19.69" lengthAdjust="spacingAndGlyphs">-7.88</text>
<rect x="574" y="255.5" width="2.8" height="10.6" fill="#8fb2ea"/>
<text x="577" y="264.2" fill="#5a5a5a" font-size="9.6" textLength="10.6" lengthAdjust="spacingAndGlyphs">+1</text>
<text x="590.5" y="264.2" fill="#5c5cf0" font-size="9.6" textLength="73.6" lengthAdjust="spacingAndGlyphs">05sep. 6050 Put Δ</text>
<text x="699" y="264.2" fill="#5c5cf0" font-size="9.6" text-anchor="end" textLength="24.5" lengthAdjust="spacingAndGlyphs">-25.31</text>
<rect x="574" y="267.2" width="2.8" height="10.6" fill="#8fb2ea"/>
<text x="577" y="275.9" fill="#5a5a5a" font-size="9.6" textLength="7.8" lengthAdjust="spacingAndGlyphs">-2</text>
<text x="588" y="275.9" fill="#f06262" font-size="9.6" textLength="73.6" lengthAdjust="spacingAndGlyphs">05sep. 5850 Put Δ</text>
<text x="696.7" y="275.9" fill="#f06262" font-size="9.6" text-anchor="end" textLength="24.5" lengthAdjust="spacingAndGlyphs">-13.82</text>
<rect x="568" y="420" width="97" height="46" rx="4" fill="#e9eef6" fill-opacity="0.88" stroke="#9ba8bd" stroke-width="1"/>
<text x="574.5" y="435.3" fill="#6fae6f" textLength="56.5" lengthAdjust="spacingAndGlyphs">05/09/2025 (0)</text>
<text x="574.5" y="446.4" fill="#f28a8a" textLength="83.5" lengthAdjust="spacingAndGlyphs">20/08/2025 (16) T+16</text>
<text x="574.5" y="457.8" fill="#86e486" textLength="78.5" lengthAdjust="spacingAndGlyphs">04/08/2025 (32) T+0</text>
<text transform="translate(622.2 468) rotate(-90)" fill="#b070c0" font-size="9" textLength="31.07" lengthAdjust="spacingAndGlyphs">6019.44</text>
<text x="581" y="463.3" fill="#8a2a9a" font-size="9" font-weight="bold" textLength="24.37" lengthAdjust="spacingAndGlyphs">23.0%</text>
<rect x="519.5" y="489.5" width="580" height="157.5" rx="4" fill="#e7eef8" stroke="#8d9bb2" stroke-width="1"/>
<text x="541.5" y="517" text-anchor="middle" fill="#686d78" font-size="9.2" textLength="15.63" lengthAdjust="spacingAndGlyphs">PnL</text>
<path d="M564 512.5 H1080" stroke="#8a8f9c" stroke-width="1" fill="none"/>
<rect x="564" y="503.7" width="66.75" height="8.8" fill="#4f6ef5" stroke="#444c66" stroke-width="0.6"/>
<rect x="630.75" y="505.3" width="53.5" height="7.2" fill="#4f6ef5" stroke="#444c66" stroke-width="0.6"/>
<rect x="684.25" y="507" width="53.5" height="5.5" fill="#4f6ef5" stroke="#444c66" stroke-width="0.6"/>
<rect x="737.75" y="508.5" width="53.5" height="4" fill="#4f6ef5" stroke="#444c66" stroke-width="0.6"/>
<rect x="791.25" y="509.9" width="53.5" height="2.6" fill="#4f6ef5" stroke="#444c66" stroke-width="0.6"/>
<rect x="844.75" y="511.2" width="53.5" height="1.3" fill="#4f6ef5" stroke="#444c66" stroke-width="0.6"/>
<rect x="898.25" y="512.1" width="53.5" height="0.4" fill="#4f6ef5" stroke="#444c66" stroke-width="0.6"/>
<rect x="951.75" y="512.5" width="53.5" height="0.6" fill="#f47a7a" stroke="#444c66" stroke-width="0.6"/>
<rect x="1005.25" y="512.5" width="53.5" height="1.4" fill="#f47a7a" stroke="#444c66" stroke-width="0.6"/>
<rect x="1058.75" y="512.5" width="53.5" height="2.2" fill="#f47a7a" stroke="#444c66" stroke-width="0.6"/>
<text x="603.5" y="520.8" text-anchor="middle" fill="#6b6bf0" textLength="19.12" lengthAdjust="spacingAndGlyphs">1337</text>
<text x="657" y="520.8" text-anchor="middle" fill="#6b6bf0" textLength="19.12" lengthAdjust="spacingAndGlyphs">1089</text>
<text x="710.5" y="520.8" text-anchor="middle" fill="#6b6bf0" textLength="14.34" lengthAdjust="spacingAndGlyphs">843</text>
<text x="764" y="520.8" text-anchor="middle" fill="#6b6bf0" textLength="14.34" lengthAdjust="spacingAndGlyphs">609</text>
<text x="817.5" y="520.8" text-anchor="middle" fill="#6b6bf0" textLength="14.34" lengthAdjust="spacingAndGlyphs">395</text>
<text x="871" y="520.8" text-anchor="middle" fill="#6b6bf0" textLength="14.34" lengthAdjust="spacingAndGlyphs">204</text>
<text x="924.5" y="520.8" text-anchor="middle" fill="#6b6bf0" textLength="9.56" lengthAdjust="spacingAndGlyphs">40</text>
<text x="603.5" y="530" text-anchor="middle" fill="#6b6bf0" textLength="21.98" lengthAdjust="spacingAndGlyphs">147%</text>
<text x="657" y="530" text-anchor="middle" fill="#6b6bf0" textLength="21.98" lengthAdjust="spacingAndGlyphs">120%</text>
<text x="710.5" y="530" text-anchor="middle" fill="#6b6bf0" textLength="17.2" lengthAdjust="spacingAndGlyphs">93%</text>
<text x="764" y="530" text-anchor="middle" fill="#6b6bf0" textLength="17.2" lengthAdjust="spacingAndGlyphs">67%</text>
<text x="817.5" y="530" text-anchor="middle" fill="#6b6bf0" textLength="17.2" lengthAdjust="spacingAndGlyphs">43%</text>
<text x="871" y="530" text-anchor="middle" fill="#6b6bf0" textLength="17.2" lengthAdjust="spacingAndGlyphs">22%</text>
<text x="924.5" y="530" text-anchor="middle" fill="#6b6bf0" textLength="12.42" lengthAdjust="spacingAndGlyphs">4%</text>
<text x="978" y="501.9" text-anchor="middle" fill="#f07070" textLength="19.43" lengthAdjust="spacingAndGlyphs">-11%</text>
<text x="1031.5" y="501.9" text-anchor="middle" fill="#f07070" textLength="20.07" lengthAdjust="spacingAndGlyphs">-23%</text>
<text x="1085" y="501.9" text-anchor="middle" fill="#f07070" textLength="20.07" lengthAdjust="spacingAndGlyphs">-35%</text>
<text x="978" y="512.6" text-anchor="middle" fill="#f07070" textLength="12.42" lengthAdjust="spacingAndGlyphs">-97</text>
<text x="1031.5" y="512.6" text-anchor="middle" fill="#f07070" textLength="17.2" lengthAdjust="spacingAndGlyphs">-209</text>
<text x="1085" y="512.6" text-anchor="middle" fill="#f07070" textLength="17.2" lengthAdjust="spacingAndGlyphs">-318</text>
<text x="541.5" y="553.3" text-anchor="middle" fill="#686d78" font-size="9.2" textLength="20.51" lengthAdjust="spacingAndGlyphs">Delta</text>
<path d="M564 549.5 H1080" stroke="#8a8f9c" stroke-width="1" fill="none"/>
<rect x="564" y="549.5" width="66.75" height="8.5" fill="#f47a7a" stroke="#444c66" stroke-width="0.6"/>
<rect x="630.75" y="549.5" width="53.5" height="8.6" fill="#f47a7a" stroke="#444c66" stroke-width="0.6"/>
<rect x="684.25" y="549.5" width="53.5" height="8.3" fill="#f47a7a" stroke="#444c66" stroke-width="0.6"/>
<rect x="737.75" y="549.5" width="53.5" height="7.8" fill="#f47a7a" stroke="#444c66" stroke-width="0.6"/>
<rect x="791.25" y="549.5" width="53.5" height="7" fill="#f47a7a" stroke="#444c66" stroke-width="0.6"/>
<rect x="844.75" y="549.5" width="53.5" height="6.1" fill="#f47a7a" stroke="#444c66" stroke-width="0.6"/>
<rect x="898.25" y="549.5" width="53.5" height="5.2" fill="#f47a7a" stroke="#444c66" stroke-width="0.6"/>
<rect x="951.75" y="549.5" width="53.5" height="4.3" fill="#f47a7a" stroke="#444c66" stroke-width="0.6"/>
<rect x="1005.25" y="549.5" width="53.5" height="3.4" fill="#f47a7a" stroke="#444c66" stroke-width="0.6"/>
<rect x="1058.75" y="549.5" width="53.5" height="2.7" fill="#f47a7a" stroke="#444c66" stroke-width="0.6"/>
<text x="603.5" y="548.3" text-anchor="middle" fill="#f07070" textLength="19.59" lengthAdjust="spacingAndGlyphs">-4.91</text>
<text x="657" y="548.3" text-anchor="middle" fill="#f07070" textLength="19.59" lengthAdjust="spacingAndGlyphs">-4.98</text>
<text x="710.5" y="548.3" text-anchor="middle" fill="#f07070" textLength="19.59" lengthAdjust="spacingAndGlyphs">-4.82</text>
<text x="764" y="548.3" text-anchor="middle" fill="#f07070" textLength="19.59" lengthAdjust="spacingAndGlyphs">-4.50</text>
<text x="817.5" y="548.3" text-anchor="middle" fill="#f07070" textLength="19.59" lengthAdjust="spacingAndGlyphs">-4.06</text>
<text x="871" y="548.3" text-anchor="middle" fill="#f07070" textLength="19.59" lengthAdjust="spacingAndGlyphs">-3.55</text>
<text x="924.5" y="548.3" text-anchor="middle" fill="#f07070" textLength="19.59" lengthAdjust="spacingAndGlyphs">-3.01</text>
<text x="978" y="548.3" text-anchor="middle" fill="#f07070" textLength="19.59" lengthAdjust="spacingAndGlyphs">-2.48</text>
<text x="1031.5" y="548.3" text-anchor="middle" fill="#f07070" textLength="19.59" lengthAdjust="spacingAndGlyphs">-1.99</text>
<text x="1085" y="548.3" text-anchor="middle" fill="#f07070" textLength="19.59" lengthAdjust="spacingAndGlyphs">-1.56</text>
<text x="541.5" y="580.8" text-anchor="middle" fill="#686d78" font-size="9.2" textLength="31.25" lengthAdjust="spacingAndGlyphs">Gamma</text>
<path d="M564 576.5 H1080" stroke="#8a8f9c" stroke-width="1" fill="none"/>
<rect x="737.75" y="568.3" width="53.5" height="8.2" fill="#4f6ef5" stroke="#444c66" stroke-width="0.6"/>
<rect x="791.25" y="568.3" width="53.5" height="8.2" fill="#4f6ef5" stroke="#444c66" stroke-width="0.6"/>
<rect x="844.75" y="568.3" width="53.5" height="8.2" fill="#4f6ef5" stroke="#444c66" stroke-width="0.6"/>
<rect x="898.25" y="568.3" width="53.5" height="8.2" fill="#4f6ef5" stroke="#444c66" stroke-width="0.6"/>
<rect x="951.75" y="568.3" width="53.5" height="8.2" fill="#4f6ef5" stroke="#444c66" stroke-width="0.6"/>
<rect x="1005.25" y="568.3" width="53.5" height="8.2" fill="#4f6ef5" stroke="#444c66" stroke-width="0.6"/>
<rect x="1058.75" y="568.3" width="53.5" height="8.2" fill="#4f6ef5" stroke="#444c66" stroke-width="0.6"/>
<text x="603.5" y="585.8" text-anchor="middle" fill="#6b6bf0" textLength="16.73" lengthAdjust="spacingAndGlyphs">0.00</text>
<text x="657" y="585.8" text-anchor="middle" fill="#6b6bf0" textLength="16.73" lengthAdjust="spacingAndGlyphs">0.00</text>
<text x="710.5" y="585.8" text-anchor="middle" fill="#6b6bf0" textLength="16.73" lengthAdjust="spacingAndGlyphs">0.00</text>
<text x="764" y="585.8" text-anchor="middle" fill="#6b6bf0" textLength="16.73" lengthAdjust="spacingAndGlyphs">0.01</text>
<text x="817.5" y="585.8" text-anchor="middle" fill="#6b6bf0" textLength="16.73" lengthAdjust="spacingAndGlyphs">0.01</text>
<text x="871" y="585.8" text-anchor="middle" fill="#6b6bf0" textLength="16.73" lengthAdjust="spacingAndGlyphs">0.01</text>
<text x="924.5" y="585.8" text-anchor="middle" fill="#6b6bf0" textLength="16.73" lengthAdjust="spacingAndGlyphs">0.01</text>
<text x="978" y="585.8" text-anchor="middle" fill="#6b6bf0" textLength="16.73" lengthAdjust="spacingAndGlyphs">0.01</text>
<text x="1031.5" y="585.8" text-anchor="middle" fill="#6b6bf0" textLength="16.73" lengthAdjust="spacingAndGlyphs">0.01</text>
<text x="1085" y="585.8" text-anchor="middle" fill="#6b6bf0" textLength="16.73" lengthAdjust="spacingAndGlyphs">0.01</text>
<text x="541.5" y="608.3" text-anchor="middle" fill="#686d78" font-size="9.2" textLength="22.47" lengthAdjust="spacingAndGlyphs">Theta</text>
<path d="M564 604.3 H1080" stroke="#8a8f9c" stroke-width="1" fill="none"/>
<rect x="564" y="595.5" width="66.75" height="8.8" fill="#4f6ef5" stroke="#444c66" stroke-width="0.6"/>
<rect x="630.75" y="597.2" width="53.5" height="7.1" fill="#4f6ef5" stroke="#444c66" stroke-width="0.6"/>
<rect x="684.25" y="598.9" width="53.5" height="5.4" fill="#4f6ef5" stroke="#444c66" stroke-width="0.6"/>
<rect x="737.75" y="600.4" width="53.5" height="3.9" fill="#4f6ef5" stroke="#444c66" stroke-width="0.6"/>
<rect x="791.25" y="601.8" width="53.5" height="2.5" fill="#4f6ef5" stroke="#444c66" stroke-width="0.6"/>
<rect x="844.75" y="602.8" width="53.5" height="1.5" fill="#4f6ef5" stroke="#444c66" stroke-width="0.6"/>
<rect x="898.25" y="603.6" width="53.5" height="0.7" fill="#4f6ef5" stroke="#444c66" stroke-width="0.6"/>
<rect x="951.75" y="604.1" width="53.5" height="0.2" fill="#4f6ef5" stroke="#444c66" stroke-width="0.6"/>
<rect x="1005.25" y="604.3" width="53.5" height="0.4" fill="#f47a7a" stroke="#444c66" stroke-width="0.6"/>
<rect x="1058.75" y="604.3" width="53.5" height="0.8" fill="#f47a7a" stroke="#444c66" stroke-width="0.6"/>
<text x="603.5" y="613.3" text-anchor="middle" fill="#6b6bf0" textLength="21.51" lengthAdjust="spacingAndGlyphs">37.55</text>
<text x="657" y="613.3" text-anchor="middle" fill="#6b6bf0" textLength="21.51" lengthAdjust="spacingAndGlyphs">30.31</text>
<text x="710.5" y="613.3" text-anchor="middle" fill="#6b6bf0" textLength="21.51" lengthAdjust="spacingAndGlyphs">23.14</text>
<text x="764" y="613.3" text-anchor="middle" fill="#6b6bf0" textLength="21.51" lengthAdjust="spacingAndGlyphs">16.53</text>
<text x="817.5" y="613.3" text-anchor="middle" fill="#6b6bf0" textLength="21.51" lengthAdjust="spacingAndGlyphs">10.85</text>
<text x="871" y="613.3" text-anchor="middle" fill="#6b6bf0" textLength="16.73" lengthAdjust="spacingAndGlyphs">6.25</text>
<text x="924.5" y="613.3" text-anchor="middle" fill="#6b6bf0" textLength="16.73" lengthAdjust="spacingAndGlyphs">2.80</text>
<text x="978" y="613.3" text-anchor="middle" fill="#6b6bf0" textLength="16.73" lengthAdjust="spacingAndGlyphs">0.40</text>
<text x="1031.5" y="604.3" text-anchor="middle" fill="#f07070" textLength="19.59" lengthAdjust="spacingAndGlyphs">-1.09</text>
<text x="1085" y="604.3" text-anchor="middle" fill="#f07070" textLength="19.59" lengthAdjust="spacingAndGlyphs">-2.31</text>
<text x="541.5" y="636.3" text-anchor="middle" fill="#686d78" font-size="9.2" textLength="20.04" lengthAdjust="spacingAndGlyphs">Vega</text>
<path d="M564 632 H1080" stroke="#8a8f9c" stroke-width="1" fill="none"/>
<rect x="564" y="632" width="66.75" height="8.5" fill="#f47a7a" stroke="#444c66" stroke-width="0.6"/>
<rect x="630.75" y="632" width="53.5" height="5.4" fill="#f47a7a" stroke="#444c66" stroke-width="0.6"/>
<rect x="684.25" y="632" width="53.5" height="2.6" fill="#f47a7a" stroke="#444c66" stroke-width="0.6"/>
<rect x="737.75" y="632" width="53.5" height="0.3" fill="#f47a7a" stroke="#444c66" stroke-width="0.6"/>
<rect x="791.25" y="630.4" width="53.5" height="1.6" fill="#4f6ef5" stroke="#444c66" stroke-width="0.6"/>
<rect x="844.75" y="629.4" width="53.5" height="2.6" fill="#4f6ef5" stroke="#444c66" stroke-width="0.6"/>
<rect x="898.25" y="628.4" width="53.5" height="3.6" fill="#4f6ef5" stroke="#444c66" stroke-width="0.6"/>
<rect x="951.75" y="628.1" width="53.5" height="3.9" fill="#4f6ef5" stroke="#444c66" stroke-width="0.6"/>
<rect x="1005.25" y="628.1" width="53.5" height="3.9" fill="#4f6ef5" stroke="#444c66" stroke-width="0.6"/>
<rect x="1058.75" y="628.4" width="53.5" height="3.6" fill="#4f6ef5" stroke="#444c66" stroke-width="0.6"/>
<text x="603.5" y="632" text-anchor="middle" fill="#f07070" textLength="24.37" lengthAdjust="spacingAndGlyphs">-75.65</text>
<text x="657" y="632" text-anchor="middle" fill="#f07070" textLength="24.37" lengthAdjust="spacingAndGlyphs">-47.91</text>
<text x="710.5" y="632" text-anchor="middle" fill="#f07070" textLength="24.37" lengthAdjust="spacingAndGlyphs">-22.91</text>
<text x="764" y="632" text-anchor="middle" fill="#f07070" textLength="19.59" lengthAdjust="spacingAndGlyphs">-1.96</text>
<text x="817.5" y="640.3" text-anchor="middle" fill="#6b6bf0" textLength="21.51" lengthAdjust="spacingAndGlyphs">14.20</text>
<text x="871" y="640.3" text-anchor="middle" fill="#6b6bf0" textLength="21.51" lengthAdjust="spacingAndGlyphs">23.44</text>
<text x="924.5" y="640.3" text-anchor="middle" fill="#6b6bf0" textLength="21.51" lengthAdjust="spacingAndGlyphs">32.08</text>
<text x="978" y="640.3" text-anchor="middle" fill="#6b6bf0" textLength="21.51" lengthAdjust="spacingAndGlyphs">34.77</text>
<text x="1031.5" y="640.3" text-anchor="middle" fill="#6b6bf0" textLength="21.51" lengthAdjust="spacingAndGlyphs">34.37</text>
<text x="1085" y="640.3" text-anchor="middle" fill="#6b6bf0" textLength="21.51" lengthAdjust="spacingAndGlyphs">32.10</text>
<rect x="836.6" y="475" width="42.4" height="171.5" rx="4" fill="#e9eef7" fill-opacity="0.88" stroke="#8593ab" stroke-width="1"/>
<text x="857.8" y="484" text-anchor="middle" fill="#333" font-size="9" textLength="31.07" lengthAdjust="spacingAndGlyphs">6238.01</text>
<text x="857.8" y="512.8" text-anchor="middle" fill="#3434e6" font-size="9" font-weight="bold" textLength="14.34" lengthAdjust="spacingAndGlyphs">248</text>
<text x="857.8" y="525.8" text-anchor="middle" fill="#3434e6" font-size="9" font-weight="bold" textLength="24.37" lengthAdjust="spacingAndGlyphs">27.2%</text>
<text x="857.8" y="553" text-anchor="middle" fill="#e23a3a" font-size="9" font-weight="bold" textLength="19.59" lengthAdjust="spacingAndGlyphs">-3.67</text>
<text x="857.8" y="580.3" text-anchor="middle" fill="#3434e6" font-size="9" font-weight="bold" textLength="16.73" lengthAdjust="spacingAndGlyphs">0.01</text>
<text x="857.8" y="608.3" text-anchor="middle" fill="#3434e6" font-size="9" font-weight="bold" textLength="16.73" lengthAdjust="spacingAndGlyphs">7.25</text>
<text x="857.8" y="636.3" text-anchor="middle" fill="#3434e6" font-size="9" font-weight="bold" textLength="21.51" lengthAdjust="spacingAndGlyphs">23.18</text>
</svg>
<div class="b" style="left:516px;top:647.5px;width:564px;height:3.5px;background:#f3f6fb;"></div>
<div class="b" style="left:516px;top:651px;width:564px;height:21px;background:#28344f;"></div>
<div class="t" style="left:1046px;top:657px;font-size:10.8px;letter-spacing:-0.28px;color:#eef1f7;">340%</div>
<svg class="b" style="left:0px;top:52px" width="18" height="27"><g transform="translate(0 0)"><defs><linearGradient id="gb" x1="0" x2="1"><stop offset="0" stop-color="#7fb2e6"/><stop offset="1" stop-color="#4f86c6"/></linearGradient>
<linearGradient id="gg" x1="0" x2="1"><stop offset="0" stop-color="#a9cc6a"/><stop offset="1" stop-color="#6f9a3a"/></linearGradient>
<linearGradient id="go" x1="0" x2="1"><stop offset="0" stop-color="#f7d58a"/><stop offset="0.5" stop-color="#f0a050"/><stop offset="1" stop-color="#d9703a"/></linearGradient></defs>
<rect x="-3" y="11.5" width="6" height="13" rx="1" fill="url(#gb)"/>
<rect x="4" y="6.5" width="5.5" height="18" rx="1.2" fill="url(#gg)"/>
<rect x="10" y="2" width="5.5" height="22.5" rx="1.2" fill="url(#go)"/></g></svg>
<svg class="b" style="left:55px;top:52px" width="22" height="25.5"><g transform="translate(0 0.5)"><rect x="0.5" y="0.5" width="20" height="23.5" fill="#fbfcfe" stroke="#b4c2de" stroke-width="1"/><rect x="2.5" y="2.5" width="16" height="19.5" fill="#e9eef8"/><rect x="3.6" y="4.2" width="13.3" height="1.3" fill="#9fb6dc"/><rect x="3.6" y="6.75" width="13.3" height="1.3" fill="#9fb6dc"/><rect x="3.6" y="9.3" width="13.3" height="1.3" fill="#9fb6dc"/><rect x="3.6" y="11.85" width="13.3" height="1.3" fill="#9fb6dc"/><rect x="3.6" y="14.4" width="13.3" height="1.3" fill="#9fb6dc"/><rect x="3.6" y="16.95" width="13.3" height="1.3" fill="#9fb6dc"/><rect x="3.6" y="19.5" width="13.3" height="1.3" fill="#9fb6dc"/></g></svg>
<svg class="b" style="left:120px;top:53px" width="27" height="25"><g transform="translate(0.5 0)"><rect x="0.5" y="0.5" width="18.5" height="22.5" fill="#fbfcfe" stroke="#b4c2de" stroke-width="1"/><rect x="2.3" y="2.3" width="15" height="19" fill="#edf1f9"/><rect x="3.4" y="4.2" width="9" height="1.3" fill="#a7bbdc"/><rect x="3.4" y="6.8" width="9" height="1.3" fill="#a7bbdc"/><rect x="3.4" y="12" width="9" height="1.3" fill="#a7bbdc"/><rect x="3.4" y="14.6" width="9" height="1.3" fill="#a7bbdc"/><rect x="3.4" y="17.2" width="9" height="1.3" fill="#a7bbdc"/><rect x="3.4" y="19.8" width="9" height="1.3" fill="#a7bbdc"/><rect x="3.4" y="9" width="10" height="1.4" fill="#8cc152"/><path d="M16.3 4 h4 v3.8 h3.9 v4 h-3.9 v3.9 h-4 v-3.9 h-3.9 v-4 h3.9 z" fill="#8bc34a" stroke="#5f9e2e" stroke-width="0.8"/><path d="M16.3 11.8 h4 v3.9 h-4 z M20.3 9.6 h3.9 v2.2 h-3.9z" fill="#3f9a32" opacity="0.55"/></g></svg>
<svg class="b" style="left:322px;top:55px" width="12.5" height="11.5"><g transform="translate(0 0)"><rect x="0.4" y="0.4" width="10.7" height="9.7" fill="#f3f6fc" stroke="#b8c2d8" stroke-width="0.8"/><rect x="0.4" y="0.4" width="10.7" height="2.6" fill="#e56a3a"/><rect x="0.4" y="2.6" width="10.7" height="0.9" fill="#f3b27a"/><path d="M1 5.2 H10.5 M1 7.3 H10.5 M3.6 3.6 V10 M6 3.6 V10 M8.4 3.6 V10" stroke="#b9cbe8" stroke-width="0.8"/></g></svg>
<svg class="b" style="left:336px;top:54px" width="12.5" height="12.5"><g transform="translate(0 0.5)"><rect x="0.5" y="0.5" width="10.5" height="10.5" rx="1" fill="#cfcfcf" stroke="#b3b3b3"/><path d="M4.2 2.8 V8.8 M7.3 2.8 V8.8 M2.8 5 H4.2 M7.3 6.6 H8.8 M4.2 6 H5.4" stroke="#6e6e6e" stroke-width="0.9" fill="none"/></g></svg>
<svg class="b" style="left:178px;top:76px" width="15" height="13"><g transform="translate(0 0)"><path d="M6.2 0.8 L1.6 6 L6.2 11.2 M12.3 0.8 L7.7 6 L12.3 11.2" stroke="#8f8f8f" stroke-width="2.4" fill="none"/></g></svg>
<svg class="b" style="left:382px;top:76px" width="15" height="13"><g transform="translate(0 0)"><path d="M1.7 0.8 L6.3 6 L1.7 11.2 M7.8 0.8 L12.4 6 L7.8 11.2" stroke="#8f8f8f" stroke-width="2.4" fill="none"/></g></svg>
<svg class="b" style="left:411px;top:56px" width="15" height="11"><g transform="translate(0.5 0)"><g fill="#dfeaf8" stroke="#5f9ae0" stroke-width="0.7"><circle cx="1.7" cy="1.8" r="1"/><circle cx="1.7" cy="4.9" r="1"/><circle cx="1.7" cy="8" r="1"/></g><path d="M4.9 1.8 H12.6 M4.9 4.9 H12.6 M4.9 8 H12.6" stroke="#3f475c" stroke-width="1.05"/></g></svg>
<svg class="b" style="left:412px;top:76px" width="13" height="13"><g transform="translate(0 0.5)"><path d="M9.7 3.2 V1.8 H2.2 L6.3 6 L2.2 10.2 H9.9 V8.8" fill="none" stroke="#dc8e2a" stroke-width="2.2" stroke-linejoin="miter"/><path d="M9.7 3.2 V1.8 H2.2 L6.3 6 L2.2 10.2 H9.9 V8.8" fill="none" stroke="#f8c662" stroke-width="0.9" stroke-linejoin="miter"/></g></svg>
<svg class="b" style="left:478px;top:54px" width="14" height="14"><g transform="translate(0.5 0.5)"><rect x="0.4" y="0.4" width="12.4" height="12.2" rx="0.8" fill="#f4f5f9" stroke="#c3c9da" stroke-width="0.8"/><path d="M0.6 12.4 H12.6" stroke="#aeb6cc" stroke-width="0.8"/><path d="M1.5 7.2 C2.3 8.8 3 10 4 10 C5.2 10 6 7.6 6.9 5.9" stroke="#62b04e" stroke-width="1" fill="none"/><path d="M6.9 5.9 C7.6 4.2 8 2 8.9 2 C9.8 2 10.3 3.4 10.8 4.6" stroke="#8f9a84" stroke-width="1" fill="none"/><circle cx="6.9" cy="5.9" r="0.8" fill="#d9823a"/><circle cx="10.8" cy="4.7" r="0.9" fill="#4f86d0"/><circle cx="4" cy="10" r="0.6" fill="#d9823a"/></g></svg>
<svg class="b" style="left:478px;top:76px" width="14" height="14"><g transform="translate(0.5 0.5)"><rect x="0.4" y="0.4" width="12.4" height="12.2" rx="0.8" fill="#f8f8fb" stroke="#c3c9da" stroke-width="0.8"/><path d="M0.6 12.4 H12.6" stroke="#aeb6cc" stroke-width="0.8"/><path d="M3.3 1.3 V10.8 M9.7 1.6 V10.4" stroke="#e06060" stroke-width="0.8"/><path d="M6.3 2.2 V10.6" stroke="#555" stroke-width="0.8"/><rect x="2.3" y="2.6" width="2" height="7" rx="0.8" fill="#e02a2a"/><rect x="5.1" y="3.6" width="2.4" height="4" fill="#e8e8ee" stroke="#777" stroke-width="0.5"/><rect x="8.6" y="2.8" width="2.2" height="6.4" rx="0.8" fill="#e02a2a"/></g></svg>
<svg class="b" style="left:554px;top:55px" width="14.5" height="11.8"><g transform="translate(0 0)"><rect x="0.5" y="0.5" width="12.5" height="9.8" fill="#fdfeff" stroke="#86aae0"/><rect x="0.5" y="0.5" width="12.5" height="2.4" fill="#9bbbe8"/><path d="M0.5 5.2 H13 M0.5 7.7 H13 M3.6 2.8 V10.3 M6.7 2.8 V10.3 M9.8 2.8 V10.3" stroke="#bdd1f0" stroke-width="0.8"/></g></svg>
<svg class="b" style="left:555px;top:76px" width="13" height="14"><g transform="translate(0 0.5)"><rect x="0.5" y="0.5" width="11" height="12" rx="1" fill="#c9c9c9" stroke="#b5b5b5"/><rect x="1.8" y="2" width="8.4" height="1.4" fill="#b2b2b2"/><text x="6" y="10.6" font-size="8" text-anchor="middle" fill="#9f9f9f" font-weight="bold">$</text></g></svg>
<svg class="b" style="left:637px;top:54px" width="16" height="14"><g transform="translate(0.5 0.6)"><rect x="0.7" y="0.7" width="11.6" height="9.4" rx="0.8" fill="#fdfdff" stroke="#6f9be0" stroke-width="1.2"/><rect x="0.7" y="0.7" width="11.6" height="3" fill="#8db2ea"/><g transform="translate(4.4 5.2) scale(0.98 1)"><path d="M0.5 3.6 C2.4 0.6 8.2 0.6 10.1 3.6 C8.2 6.6 2.4 6.6 0.5 3.6 Z" fill="#f7f7fa" stroke="#5b6796" stroke-width="0.9"/><circle cx="5.3" cy="3.6" r="2.4" fill="#41619a"/><circle cx="5.3" cy="3.6" r="1.1" fill="#1b2740"/><circle cx="4.5" cy="2.8" r="0.6" fill="#c9d8f0"/></g></g></svg>
<svg class="b" style="left:637px;top:77px" width="14.5" height="11"><g transform="translate(0.6 0.8)"><g transform="scale(1.27 1.32)"><path d="M0.5 3.1 C2.6 -0.2 8 -0.2 10.1 3.1" stroke="#dda263" stroke-width="1.1" fill="none"/><path d="M0.5 3.6 C2.4 0.6 8.2 0.6 10.1 3.6 C8.2 6.6 2.4 6.6 0.5 3.6 Z" fill="#f7f7fa" stroke="#5b6796" stroke-width="0.9"/><circle cx="5.3" cy="3.6" r="2.4" fill="#41619a"/><circle cx="5.3" cy="3.6" r="1.1" fill="#1b2740"/><circle cx="4.5" cy="2.8" r="0.6" fill="#c9d8f0"/></g></g></svg>
<svg class="b" style="left:725px;top:54px" width="13.6" height="13.2"><g transform="translate(0 0.5)"><rect x="0.5" y="0.5" width="11.6" height="11.2" rx="1" fill="#d9d9d9" stroke="#bcbcbc"/><rect x="0.5" y="0.5" width="11.6" height="2.8" fill="#c3c3c3"/><g fill="#b5b5b5"><rect x="2.4" y="5" width="2" height="1.8"/><rect x="5.3" y="5" width="2" height="1.8"/><rect x="8.2" y="5" width="2" height="1.8"/><rect x="2.4" y="7.9" width="2" height="1.8"/><rect x="5.3" y="7.9" width="2" height="1.8"/><rect x="8.2" y="7.9" width="2" height="1.8"/></g></g></svg>
<svg class="b" style="left:725px;top:76px" width="13.6" height="13.5"><g transform="translate(0 0.3)"><rect x="0" y="0" width="12.6" height="12.5" rx="1" fill="#e9a43a"/><path d="M0 12.5 H12.6 V8 C9 9 4 10 0 12.5 Z" fill="#d9452e"/><rect x="0" y="10" width="12.6" height="2.5" fill="#d9452e"/><circle cx="3.4" cy="9.2" r="1.2" fill="#fff"/><path d="M2.4 5.4 A4.8 4.8 0 0 1 7.2 10.2 M2.4 2.6 A7.6 7.6 0 0 1 10 10.2" stroke="#fff" stroke-width="1.3" fill="none"/></g></svg>
<svg class="b" style="left:800px;top:53px" width="26" height="26"><g transform="translate(0.5 0)"><defs><linearGradient id="gp" x1="0" y1="0" x2="0" y2="1"><stop offset="0" stop-color="#d2d2d2"/><stop offset="1" stop-color="#b6b6b6"/></linearGradient></defs><circle cx="12.5" cy="12.4" r="11.6" fill="url(#gp)" stroke="#c4c8d2" stroke-width="0.8"/><path d="M9 6.6 L18 12.4 L9 18.2 Z" fill="#dcdcdc" stroke="#e9e9e9" stroke-width="0.8" stroke-linejoin="round"/></g></svg>
<svg class="b" style="left:868px;top:76px" width="67" height="11"><g transform="translate(0 0.5)"><rect x="0.8" y="4" width="6" height="1.9" rx="0.6" fill="#e6dcb2" stroke="#596380" stroke-width="0.7"/><rect x="10.3" y="4" width="42" height="1.9" rx="0.6" fill="#e6dcb2" stroke="#596380" stroke-width="0.7"/><path d="M32 2.6 V7.4" stroke="#596380" stroke-width="1.3"/><rect x="51.4" y="1" width="2.8" height="8" rx="0.8" fill="#f6e9a8" stroke="#596380" stroke-width="0.7"/><path d="M58 5 H64.5 M61.2 1.8 V8.2" stroke="#4a556e" stroke-width="1.4"/><circle cx="61.2" cy="5" r="1.1" fill="#e6dcb2"/></g></svg>
<svg class="b" style="left:1058px;top:56px" width="27" height="47"><g transform="translate(0 0)"><ellipse cx="17" cy="37.5" rx="9" ry="1.6" fill="#aab2c4" opacity="0.75"/><ellipse cx="16.5" cy="22" rx="7.2" ry="17.5" transform="rotate(12 16.5 22)" fill="none" stroke="#e8b426" stroke-width="2"/><ellipse cx="17" cy="25" rx="16" ry="6.2" transform="rotate(-35 17 25)" fill="none" stroke="#eec040" stroke-width="1.8"/><circle cx="23" cy="22" r="5.8" fill="#4a8ad4"/><circle cx="21.8" cy="20.2" r="2.6" fill="#a4cbf2"/><circle cx="18" cy="10.4" r="2.2" fill="#d23a2a"/></g></svg>
<svg class="b" style="left:339px;top:142px" width="14" height="14"><g transform="translate(0 0)"><rect x="0.5" y="0.5" width="9.6" height="11" fill="#f7f9fd" stroke="#a9b9d8"/><circle cx="8" cy="8.6" r="4" fill="#7cc043" stroke="#4f8f2a" stroke-width="0.8"/><path d="M8 6.2 V11 M5.6 8.6 H10.4" stroke="#fff" stroke-width="1.4"/></g></svg>
<svg class="b" style="left:408px;top:142px" width="16" height="16"><g transform="translate(0 0)"><path d="M8.6 9 L13.3 13.4" stroke="#c98a4a" stroke-width="2.2" stroke-linecap="round"/><circle cx="5.6" cy="5.7" r="4.7" fill="#cfe6fa" stroke="#7aa7dc" stroke-width="1.2"/><circle cx="4.6" cy="4.6" r="2" fill="#f2f9ff" opacity="0.9"/></g></svg>
<svg class="b" style="left:430px;top:143px" width="15.5" height="13"><g transform="translate(0 0)"><rect x="5.4" y="0.5" width="8.4" height="10.6" fill="#fdfeff" stroke="#7f9fd0" stroke-width="0.9"/><path d="M5.4 4 H13.8 M5.4 7.6 H13.8 M9.6 0.5 V11" stroke="#9db6de" stroke-width="0.8"/><path d="M2.4 2.6 h2.6 v2 h2 v2.6 h-2 v2 h-2.6 v-2 h-2 v-2.6 h2 z" fill="#86c440" stroke="#5a962a" stroke-width="0.7"/></g></svg>
<svg class="b" style="left:452px;top:142px" width="15.4" height="15.4"><g transform="translate(0.5 0.3)"><defs><radialGradient id="gr" cx="0.4" cy="0.35" r="0.7"><stop offset="0" stop-color="#f06a5a"/><stop offset="1" stop-color="#c9211e"/></radialGradient></defs><circle cx="7.2" cy="7.2" r="6.8" fill="url(#gr)" stroke="#b52a26" stroke-width="0.6"/><path d="M4.6 4.6 L9.8 9.8 M9.8 4.6 L4.6 9.8" stroke="#fff" stroke-width="2.1" stroke-linecap="round"/></g></svg>
<svg class="b" style="left:485px;top:142px" width="15" height="15"><g transform="translate(0.5 0.5)"><g transform="translate(7 7)"><rect x="-1.2" y="-6.3" width="2.4" height="2.6" rx="0.5" transform="rotate(0)" fill="#9fa8bd"/><rect x="-1.2" y="-6.3" width="2.4" height="2.6" rx="0.5" transform="rotate(45)" fill="#9fa8bd"/><rect x="-1.2" y="-6.3" width="2.4" height="2.6" rx="0.5" transform="rotate(90)" fill="#9fa8bd"/><rect x="-1.2" y="-6.3" width="2.4" height="2.6" rx="0.5" transform="rotate(135)" fill="#9fa8bd"/><rect x="-1.2" y="-6.3" width="2.4" height="2.6" rx="0.5" transform="rotate(180)" fill="#9fa8bd"/><rect x="-1.2" y="-6.3" width="2.4" height="2.6" rx="0.5" transform="rotate(225)" fill="#9fa8bd"/><rect x="-1.2" y="-6.3" width="2.4" height="2.6" rx="0.5" transform="rotate(270)" fill="#9fa8bd"/><rect x="-1.2" y="-6.3" width="2.4" height="2.6" rx="0.5" transform="rotate(315)" fill="#9fa8bd"/><circle r="3.8" fill="none" stroke="#9fa8bd" stroke-width="1.9"/><circle r="1.5" fill="none" stroke="#9fa8bd" stroke-width="0.8"/></g></g></svg>
</body></html>
